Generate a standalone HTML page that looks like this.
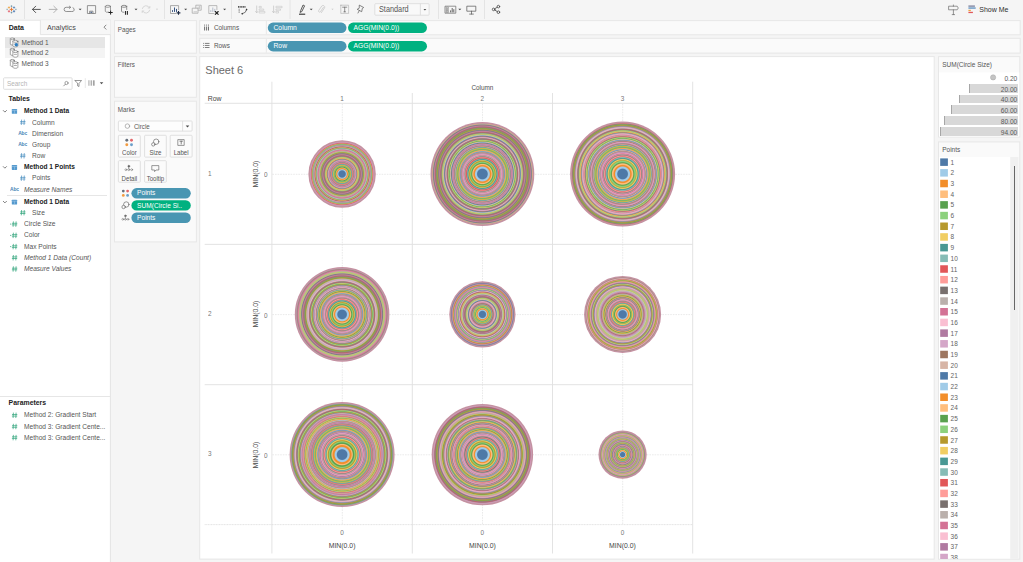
<!DOCTYPE html>
<html lang="en"><head><meta charset="utf-8"><title>Sheet 6</title>
<style>
*{box-sizing:border-box;margin:0;padding:0}
html,body{width:1023px;height:562px;overflow:hidden}
body{position:relative;background:#f5f5f5;font-family:"Liberation Sans",sans-serif;font-size:6.5px;color:#333;line-height:1}
.abs,.t,.li,.hl,svg{position:absolute}
.t{white-space:nowrap;line-height:8px;height:8px;color:#555}
.t{transform:scaleY(1.12)}
.b{font-weight:bold;color:#222;transform:none}
.it{font-style:italic}
.pt{position:absolute;color:#fff;white-space:nowrap;line-height:8px;height:8px}
.hl{height:1px;background:#e3e3e3}
svg{left:0;top:0;overflow:visible}
svg.ic{overflow:visible}
.btn{position:absolute}
.btn .t{left:0;right:0;text-align:center;font-size:6.100px}
.li{left:940px;height:9px;width:60px}
.li span{position:absolute;left:10.600px;top:0.300px;line-height:8px;font-size:6.500px;color:#636363;transform:scaleY(1.12)}
.leglist{position:absolute;left:0;top:0;width:1023px;height:558.800px;overflow:hidden}
.sz{position:absolute;right:0;height:8.600px;background:#d8d8d8;border-left:1px solid #a6a6a6}
.szt{position:absolute;right:0.900px;font-size:6.600px;line-height:9px;color:#5a5a5a;margin-top:0.600px;transform:scaleY(1.08)}
.ax{font-size:6.400px;color:#777;transform:scaleY(1.15)}
.axl{font-size:6.900px;color:#454545;transform:none}

</style></head>
<body>
<svg class="ic" width="1023" height="562" viewBox="0 0 1023 562"><rect x="0" y="20.200" width="110.400" height="543" fill="#fff"/><path d="M110.4 19.8V562" stroke="#e4e4e4" stroke-width="1" fill="none"/><path d="M0 20.200H110.400" stroke="#e2e2e2" stroke-width="0.900" fill="none"/><path d="M40.400 20.200H110.400V34.600H40.400Z" fill="#f7f7f7"/><path d="M40.400 20.200V34.600H110.400" stroke="#e2e2e2" stroke-width="0.900" fill="none"/><rect x="114.5" y="20.6" width="81.90" height="32.60" fill="#fafafa" stroke="#e7e7e7" stroke-width="1"/><rect x="114.5" y="56.6" width="81.90" height="40.70" fill="#fafafa" stroke="#e7e7e7" stroke-width="1"/><rect x="114.5" y="101.2" width="81.90" height="140.70" fill="#fafafa" stroke="#e7e7e7" stroke-width="1"/><rect x="199.7" y="20.6" width="820.50" height="14.20" fill="#fafafa" stroke="#e7e7e7" stroke-width="1"/><rect x="199.7" y="38.3" width="820.50" height="14.80" fill="#fafafa" stroke="#e7e7e7" stroke-width="1"/><rect x="199.7" y="56.6" width="734.50" height="502.50" fill="#fff" stroke="#e7e7e7" stroke-width="1"/><rect x="938.5" y="56.6" width="81.30" height="80.40" fill="#fafafa" stroke="#e7e7e7" stroke-width="1"/><rect x="938.5" y="141.9" width="81.30" height="417.20" fill="#fafafa" stroke="#e7e7e7" stroke-width="1"/><rect x="939" y="72.400" width="80.300" height="64.100" fill="#fff"/><rect x="939" y="157" width="71.300" height="401.600" fill="#fff"/><rect x="1010.300" y="157" width="8.100" height="401.600" fill="#f0f0f0"/><path d="M266.400 21.100V34.100M266.400 39V52.600" stroke="#e6e6e6" stroke-width="0.900" fill="none"/><rect x="118.4" y="121.0" width="73.70" height="10.10" fill="#fdfdfd" stroke="#d9d9d9" stroke-width="0.8" rx="0.8"/><path d="M182.600 121V131.100" stroke="#d9d9d9" stroke-width="0.800" fill="none"/><rect x="118.4" y="135.3" width="21.90" height="21.80" fill="#fbfbfb" stroke="#d9d9d9" stroke-width="0.8" rx="0.8"/><rect x="144.6" y="135.3" width="21.70" height="21.80" fill="#fbfbfb" stroke="#d9d9d9" stroke-width="0.8" rx="0.8"/><rect x="170.2" y="135.3" width="21.90" height="21.80" fill="#fbfbfb" stroke="#d9d9d9" stroke-width="0.8" rx="0.8"/><rect x="118.4" y="160.7" width="21.90" height="21.50" fill="#fbfbfb" stroke="#d9d9d9" stroke-width="0.8" rx="0.8"/><rect x="144.6" y="160.7" width="21.70" height="21.50" fill="#fbfbfb" stroke="#d9d9d9" stroke-width="0.8" rx="0.8"/><rect x="3.6" y="77.8" width="68.50" height="11.50" fill="#fff" stroke="#d6d6d6" stroke-width="0.8" rx="0.8"/><rect x="374.8" y="3.7" width="54.30" height="11.50" fill="#f9f9f9" stroke="#d9d9d9" stroke-width="0.8" rx="0.8"/><path d="M420.400 3.700V15.200" stroke="#d9d9d9" stroke-width="0.800" fill="none"/></svg>
<!-- toolbar -->
<svg class="ic" width="1023" height="20" viewBox="0 0 1023 20" fill="none" stroke-linecap="round" stroke-linejoin="round">
  <!-- tableau logo -->
  <g stroke-linecap="butt" transform="translate(11.500 9.400) scale(0.760) translate(-11.300 -9.400)">
    <path d="M11.300 7v4.800M8.900 9.400h4.800" stroke="#e8762d" stroke-width="1.200"/>
    <path d="M11.300 4v2.400M10.100 5.200h2.400M11.300 12.400v2.400M10.100 13.600h2.400" stroke="#5b879b" stroke-width="0.800"/>
    <path d="M8 5.400v3M6.500 6.900h3" stroke="#f0a340" stroke-width="1"/>
    <path d="M14.600 5.400v3M13.100 6.900h3" stroke="#5080b8" stroke-width="1"/>
    <path d="M8 10.400v3M6.500 11.900h3" stroke="#e0505c" stroke-width="1"/>
    <path d="M14.600 10.400v3M13.100 11.900h3" stroke="#3a6cab" stroke-width="1"/>
    <path d="M5.600 8.400v2M4.600 9.400h2M17 8.400v2M16 9.400h2" stroke="#7199a6" stroke-width="0.700"/>
  </g>
  <!-- separators -->
  <g stroke="#e4e4e4" stroke-width="1" stroke-linecap="butt">
    <path d="M24.5 0v19M164.5 0v19M231.5 0v19M290 0v19M438.5 0v19M484.5 0v19"/>
  </g>
  <!-- back / forward -->
  <path d="M40.300 9.400H32.500M35.700 6.200L32.500 9.400l3.200 3.200" stroke="#444" stroke-width="0.900"/>
  <path d="M49.2 9.4H57M53.8 6.2L57 9.4l-3.2 3.2" stroke="#aaa" stroke-width="0.9"/>
  <!-- replay -->
  <path d="M70.5 7.3H66.2a2 2 0 0 0 0 4.2h5.6a2 2 0 0 0 1.2-3.8M69.4 6.2l1.3 1.1-1.3 1.1" stroke="#777" stroke-width="0.8"/>
  <!-- save -->
  <path d="M87.800 5.600h7.800v7.900h-7.800zM89.600 13.500v-2.300h3.400v2.300" stroke="#7c7c7c" stroke-width="0.800"/><path d="M90.800 12.300h1" stroke="#33507f" stroke-width="1"/>
  <!-- add datasource -->
  <g stroke="#777" stroke-width="0.700">
    <path d="M105.300 6.300v5a2.600 1 0 0 0 3.400 .900M110.500 6.300v3.600"/>
    <ellipse cx="107.9" cy="6.3" rx="2.6" ry="1"/>
    <path d="M110.6 10.8v3.4M108.9 12.5h3.4" stroke="#222" stroke-width="1"/>
  </g>
  <!-- pause datasource -->
  <g stroke="#777" stroke-width="0.8">
    <path d="M121.5 6.3v5a2.6 1 0 0 0 2.4 1M126.7 6.3v3.2"/>
    <ellipse cx="124.1" cy="6.3" rx="2.6" ry="1"/>
    <path d="M125.500 10.900v3.800M127.400 10.900v3.800" stroke="#2b2b2b" stroke-width="1.100" stroke-linecap="butt"/>
  </g>
  <!-- refresh -->
  <path d="M142.3 8.6a3.9 3.9 0 0 1 7.2-0.8M149.7 10.2a3.9 3.9 0 0 1-7.2 0.8M149.8 6.4v1.6h-1.6M142.2 12.6V11h1.6" stroke="#cfcfcf" stroke-width="0.8"/>
  <!-- new worksheet -->
  <g stroke="#8a8a8a" stroke-width="0.700">
    <path d="M178.600 9.800V5.600H170.500V13.500H175.800"/>
    <path d="M172.500 11.900V10.200M174.500 11.900V7.500M176.500 11.900V8.900" stroke="#33507f" stroke-linecap="butt" stroke-width="1"/>
    <path d="M178.500 11v3.800M176.600 12.900h3.800" stroke="#1d2a44" stroke-width="1.100" stroke-linecap="butt"/>
  </g>
  <!-- duplicate -->
  <g stroke="#a9a9a9" stroke-width="0.8">
    <path d="M196.2 5.2h5v5h-5z"/>
    <path d="M192.6 8.2h5.4v5h-5.4z" fill="#f5f5f5"/>
    <path d="M198.2 8.6V7M199.6 8.6V6.4M194 11.8h2.6" stroke-width="0.6"/>
  </g>
  <!-- clear -->
  <g stroke="#a2a2a2" stroke-width="0.700">
    <path d="M216.900 9.600V5.600H208.800V13.500H214"/>
    <path d="M210.800 11.900V10.200M212.800 11.900V7.500M214.800 11.900V8.900" stroke="#b4bccb" stroke-linecap="butt" stroke-width="1"/>
    <path d="M215.300 11.500l2.900 2.900M218.200 11.500l-2.900 2.900" stroke="#222" stroke-width="1.100"/>
  </g>
  <!-- swap -->
  <g stroke="#444" stroke-width="0.800">
    <path d="M238 6.900h7.800" stroke="#555" stroke-dasharray="1.100 0.500" stroke-linecap="butt" stroke-width="1.600"/>
    <path d="M239.200 8.800v4.400" stroke="#999" stroke-dasharray="1 0.500" stroke-linecap="butt" stroke-width="1.400"/>
    <path d="M246.500 9.700Q246.200 13 242.700 13.600" stroke-width="0.700"/>
    <path d="M246.600 8.500l0.900 1.100-0.900 1.100-0.900-1.100zM242.200 12.700l1 1-1 1-1-1z" fill="#333" stroke="none"/>
  </g>
  <!-- sort asc / desc -->
  <g stroke="#c6c6c6" stroke-width="0.800">
    <path d="M256.700 6v6.600M255.600 11.500l1.100 1.300 1.100-1.300"/>
    <path d="M259.500 6.400h1.800v1.400h-1.800zM259.500 9h4.200v1.300h-4.200zM259.500 11.400h5.400v1.600h-5.400z" stroke-width="0.600"/>
    <path d="M273.600 6v6.600M272.500 11.500l1.100 1.300 1.100-1.300"/>
    <path d="M276.300 6.300h5.800v1.400h-5.800zM276.300 9h4.200v1.300h-4.200zM276.300 11.400h2.200v1.600h-2.200z" stroke-width="0.600"/>
  </g>
  <!-- highlighter -->
  <path d="M303.400 5.200l1.200.6-2.800 5.800-1.800.8.600-1.600z" stroke="#333" stroke-width="0.8"/>
  <path d="M299 14.200h6.200" stroke="#333" stroke-width="1.100" stroke-linecap="butt"/>
  <!-- paperclip -->
  <path d="M323.400 7.400l-3 4.400a1.100 1.100 0 0 1-1.800-1.200l3.200-4.600a1.700 1.700 0 0 1 2.800 1.800l-3.200 4.800" stroke="#c9c9c9" stroke-width="0.800"/>
  <!-- T box -->
  <path d="M340.800 5.200h7.800v8.200h-7.800z" stroke="#b0b0b0" stroke-width="0.600" stroke-dasharray="0.900 0.600"/>
  <path d="M342.600 7.200h4.200M344.700 7.200v4.600M343.900 11.800h1.600" stroke="#666" stroke-width="0.700"/>
  <!-- pin -->
  <path d="M359.600 5.300L363.700 7.500L362.300 8.400L361.700 11.700L357.200 9.300L358.900 8.400ZM359.200 10.800L358 13" stroke="#555" stroke-width="0.700"/>
  <!-- show cards -->
  <g stroke="#666" stroke-width="0.700">
    <path d="M445.400 6.200h10.400v7h-10.400z"/>
    <path d="M446.600 7.200h1.800v1.400h-1.800zM446.600 9.400h1.800v1.200h-1.800zM446.600 11.200h1.800v1.200h-1.800z" stroke-width="0.500"/>
    <path d="M450.600 12.400v-2M452.200 12.400V8M453.800 12.400v-3.200" stroke-linecap="butt" stroke-width="1"/>
  </g>
  <!-- presentation -->
  <path d="M467.200 6.200h8.600v5h-8.600zM471.500 11.200v2.800M469.600 14.100h3.800" stroke="#555" stroke-width="0.700"/>
  <!-- share -->
  <g stroke="#444" stroke-width="0.800">
    <circle cx="493.600" cy="9.400" r="1.300"/><circle cx="498.400" cy="6.600" r="1.300"/><circle cx="498.400" cy="12.200" r="1.300"/>
    <path d="M494.800 8.700l2.400-1.400M494.800 10.100l2.400 1.400"/>
  </g>
  <!-- carets -->
  <g fill="#444" stroke="none">
    <path d="M78.600 8.700h3l-1.500 1.600z"/>
    <path d="M134.500 8.700h3l-1.500 1.600z"/>
    <path d="M184.200 8.700h3l-1.500 1.600z"/>
    <path d="M223.100 8.700h3l-1.500 1.600z"/>
    <path d="M309.700 8.700h3l-1.500 1.600z"/>
    <path d="M458.300 8.700h3l-1.500 1.600z"/>
    <path d="M423.500 8.900h2.800l-1.400 1.600z" fill="#444"/>
  </g>
  <g fill="#c8c8c8" stroke="none">
    <path d="M155.900 8.800h2.200l-1.100 1.300z"/>
    <path d="M331.400 8.800h2.200l-1.100 1.300z"/>
  </g>
  <!-- guide icon (right) -->
  <path d="M949 6.200h8.200l1.100 1.800-1.100 1.800H949zM953.400 9.800v4.700M953.400 5v1.200M952.200 14.600h2.400" stroke="#6a6a6a" stroke-width="0.700"/>
  <!-- show me icon -->
  <g stroke-linecap="butt" stroke-width="1.300">
    <path d="M968.400 6.100h6.500" stroke="#7a7f9c"/>
    <path d="M968.400 8.050h7.300" stroke="#5b8fc0"/>
    <path d="M968.400 10.450h2.400" stroke="#f0a03c"/>
    <path d="M968.400 12.450h4.500" stroke="#e15759"/>
  </g>
</svg>
<div class="t" style="left:379px;top:5.500px;font-size:7.300px;color:#555">Standard</div>
<div class="t" style="left:979.300px;top:5.600px;font-size:7px;color:#2e2e2e">Show Me</div>
<!-- data pane -->
<div class="t b" style="left:8.800px;top:24.100px;font-size:7px">Data</div>
<div class="t" style="left:47px;top:24px;font-size:7.200px;color:#4a4a4a;transform:scaleY(1.05)">Analytics</div>
<div class="abs" style="left:5px;top:37px;width:99.500px;height:10.500px;background:#e6e6e6"></div>
<div class="abs" style="left:5px;top:47.500px;width:99.500px;height:10.300px;background:#f4f4f4"></div>
<svg class="ic" width="111" height="562" viewBox="0 0 111 562" fill="none" stroke-linecap="round" stroke-linejoin="round">
  <path d="M106 25.100l-2 2.050 2 2.050" stroke="#555" stroke-width="0.700"/>
  <!-- datasource icons -->
  <g stroke="#5e5e5e" stroke-width="0.550">
    <g><path d="M10.300 38.90v5.200a2 .900 0 0 0 4 0v-5.200" fill="#fff"/><ellipse cx="12.300" cy="38.90" rx="2" ry="0.900" fill="#fff"/><path d="M12.900 41.30v4.600a2.500 1 0 0 0 5 0v-4.600" fill="#fff"/><ellipse cx="15.400" cy="41.30" rx="2.500" ry="1" fill="#fff"/><path d="M14.300 44.10h2.200" stroke-width="0.500"/><circle cx="16.300" cy="44.70" r="1.700" fill="#2f7fc1" stroke="none"/></g>
    <g><path d="M10.300 49.20v5.200a2 .900 0 0 0 4 0v-5.200" fill="#fff"/><ellipse cx="12.300" cy="49.20" rx="2" ry="0.900" fill="#fff"/><path d="M12.900 51.60v4.600a2.500 1 0 0 0 5 0v-4.600" fill="#fff"/><ellipse cx="15.400" cy="51.60" rx="2.500" ry="1" fill="#fff"/><path d="M14.300 54.40h2.200" stroke-width="0.500"/></g>
    <g><path d="M10.300 60.30v5.200a2 .900 0 0 0 4 0v-5.200" fill="#fff"/><ellipse cx="12.300" cy="60.30" rx="2" ry="0.900" fill="#fff"/><path d="M12.900 62.70v4.600a2.500 1 0 0 0 5 0v-4.600" fill="#fff"/><ellipse cx="15.400" cy="62.70" rx="2.500" ry="1" fill="#fff"/><path d="M14.300 65.50h2.200" stroke-width="0.500"/></g>
  </g>
  <!-- search magnifier / filter / view -->
  <circle cx="66.500" cy="83" r="1.600" stroke="#6a6a6a" stroke-width="0.600"/>
  <path d="M65.300 84.300l-1.600 1.600" stroke="#6a6a6a" stroke-width="0.700"/>
  <path d="M75.100 80.500h6.400l-2.500 3v3l-1.400-.7v-2.300z" stroke="#555" stroke-width="0.600"/>
  <path d="M85.300 78.600v9" stroke="#e2e2e2" stroke-width="0.800"/>
  <path d="M88.900 80.300v5.400" stroke="#c4c4c4" stroke-width="1.500" stroke-linecap="butt"/>
  <path d="M91.300 80.300v5.400" stroke="#b0b0b0" stroke-width="1.500" stroke-linecap="butt"/>
  <path d="M93.800 80.300v5.400" stroke="#a2a2a2" stroke-width="1.700" stroke-linecap="butt"/>
  <path d="M99.800 82.200h3.500l-1.750 2.100z" fill="#4d4d4d" stroke="none"/>
  <!-- expand chevrons -->
  <g stroke="#6a6a6a" stroke-width="0.850">
    <path d="M3.300 110.500l1.600 1.600 1.600-1.600"/>
    <path d="M3.300 166.600l1.600 1.600 1.600-1.600"/>
    <path d="M3.300 201.300l1.600 1.600 1.600-1.600"/>
  </g>
  <!-- table icons -->
  <g fill="#559ace" stroke="none">
    <rect x="11.800" y="108.900" width="5.300" height="4.900" rx="0.600"/>
    <rect x="11.800" y="165" width="5.300" height="4.900" rx="0.600"/>
    <rect x="11.800" y="199.700" width="5.300" height="4.900" rx="0.600"/>
  </g>
  <g stroke="#a9cdea" stroke-width="0.500" stroke-linecap="butt">
    <path d="M12 110.400h5M14.500 110.400v3.200M12 166.500h5M14.500 166.500v3.200M12 201.200h5M14.500 201.200v3.200"/>
  </g>
  <!-- blue # icons -->
  <g stroke="#4a8fc0" stroke-width="0.700" stroke-linecap="butt">
    <path d="M21.600 119.600l-0.300 5.400M24.300 119.600l-0.300 5.400M20.200 121.500h5.300M20.100 123.100h5.300"/>
    <path d="M21.600 153.100l-0.300 5.400M24.300 153.100l-0.300 5.400M20.200 155.000h5.300M20.100 156.600h5.300"/>
    <path d="M21.600 175.500l-0.300 5.400M24.300 175.500l-0.300 5.400M20.200 177.400h5.300M20.100 179.000h5.300"/>
  </g>
  <!-- green # icons -->
  <g stroke="#2ea37a" stroke-width="0.700" stroke-linecap="butt">
    <path d="M21.600 210.000l-0.300 5.400M24.300 210.000l-0.300 5.400M20.200 211.900h5.300M20.100 213.500h5.300"/>
    <path d="M13.400 221.400l-0.300 5.400M16.100 221.400l-0.300 5.400M12.000 223.300h5.300M11.900 224.900h5.300M10.000 224.100h1.300"/>
    <path d="M13.400 232.700l-0.300 5.400M16.100 232.700l-0.300 5.400M12.000 234.600h5.300M11.900 236.200h5.300M10.000 235.400h1.300"/>
    <path d="M13.400 243.900l-0.300 5.400M16.100 243.900l-0.300 5.400M12.000 245.800h5.300M11.900 247.400h5.300M10.000 246.600h1.300"/>
    <path d="M13.400 255.000l-0.300 5.400M16.100 255.000l-0.300 5.400M12.000 256.900h5.300M11.900 258.500h5.300"/>
    <path d="M13.400 266.300l-0.300 5.400M16.100 266.300l-0.300 5.400M12.000 268.200h5.300M11.900 269.800h5.300"/>
    <path d="M13.400 412.600l-0.300 5.400M16.100 412.600l-0.300 5.400M12.000 414.500h5.300M11.900 416.100h5.300"/>
    <path d="M13.400 423.800l-0.300 5.400M16.100 423.800l-0.300 5.400M12.000 425.700h5.300M11.900 427.300h5.300"/>
    <path d="M13.400 434.900l-0.300 5.400M16.100 434.900l-0.300 5.400M12.000 436.800h5.300M11.900 438.400h5.300"/>
  </g>
</svg>
<div class="t" style="left:21.500px;top:38.700px;font-size:6.500px">Method 1</div>
<div class="t" style="left:21.500px;top:48.800px;font-size:6.500px">Method 2</div>
<div class="t" style="left:21.500px;top:59.900px;font-size:6.500px">Method 3</div>
<div class="t" style="left:7px;top:80.200px;font-size:6.400px;color:#b5b5b5">Search</div>
<div class="t b" style="left:8.600px;top:94.600px;font-size:6.900px">Tables</div>
<div class="t b" style="left:24px;top:106.900px;font-size:6.600px">Method 1 Data</div>
<div class="t" style="left:32px;top:118.500px;font-size:6.600px">Column</div>
<div class="t" style="left:32px;top:129.700px;font-size:6.600px">Dimension</div>
<div class="t" style="left:32px;top:140.900px;font-size:6.600px">Group</div>
<div class="t" style="left:32px;top:152px;font-size:6.600px">Row</div>
<div class="t b" style="left:24px;top:163.200px;font-size:6.600px">Method 1 Points</div>
<div class="t" style="left:32px;top:174.400px;font-size:6.600px">Points</div>
<div class="t it" style="left:24px;top:185.600px;font-size:6.600px">Measure Names</div>
<div class="hl" style="left:7px;top:195.200px;width:100px;background:#e6e6e6"></div>
<div class="t b" style="left:24px;top:197.700px;font-size:6.600px">Method 1 Data</div>
<div class="t" style="left:32px;top:208.900px;font-size:6.600px">Size</div>
<div class="t" style="left:24px;top:220.100px;font-size:6.600px">Circle Size</div>
<div class="t" style="left:24px;top:231.400px;font-size:6.600px">Color</div>
<div class="t" style="left:24px;top:242.600px;font-size:6.600px">Max Points</div>
<div class="t it" style="left:24px;top:253.700px;font-size:6.600px">Method 1 Data (Count)</div>
<div class="t it" style="left:24px;top:265px;font-size:6.600px">Measure Values</div>
<div class="hl" style="left:0;top:395.800px;width:110px;background:#e6e6e6"></div>
<div class="t b" style="left:8.600px;top:398.800px;font-size:6.900px">Parameters</div>
<div class="t" style="left:24px;top:411.300px;font-size:6.600px">Method 2: Gradient Start</div>
<div class="t" style="left:24px;top:422.500px;font-size:6.600px">Method 3: Gradient Cente...</div>
<div class="t" style="left:24px;top:433.600px;font-size:6.600px">Method 3: Gradient Cente...</div>
<!-- Abc icons -->
<div class="t" style="left:18.200px;top:130.200px;font-size:4.900px;font-weight:bold;color:#4a84b6;letter-spacing:-0.100px">Abc</div>
<div class="t" style="left:18.200px;top:141.400px;font-size:4.900px;font-weight:bold;color:#4a84b6;letter-spacing:-0.100px">Abc</div>
<div class="t" style="left:10px;top:186.100px;font-size:4.900px;font-weight:bold;color:#4a84b6;letter-spacing:-0.100px">Abc</div>
<!-- pages / filters / marks cards -->
<div class="t" style="left:117.800px;top:25.500px;font-size:6.300px">Pages</div>
<div class="t" style="left:117.800px;top:61.100px;font-size:6.300px">Filters</div>
<div class="t" style="left:117.800px;top:105.800px;font-size:6.300px">Marks</div>
<div class="t" style="left:133.900px;top:122.800px;font-size:6.200px">Circle</div>
<div class="btn" style="left:118.100px;top:135px;width:22.600px;height:22.400px"><div class="t" style="top:13.900px">Color</div></div>
<div class="btn" style="left:144.200px;top:135px;width:22.500px;height:22.400px"><div class="t" style="top:13.900px">Size</div></div>
<div class="btn" style="left:169.900px;top:135px;width:22.500px;height:22.400px"><div class="t" style="top:13.900px">Label</div></div>
<div class="btn" style="left:118.100px;top:160.400px;width:22.600px;height:22.200px"><div class="t" style="top:14.400px">Detail</div></div>
<div class="btn" style="left:144.200px;top:160.400px;width:22.500px;height:22.200px"><div class="t" style="top:14.400px">Tooltip</div></div>
<svg class="ic" width="200" height="250" viewBox="0 0 200 250" fill="none" stroke-linecap="round" stroke-linejoin="round">
  <circle cx="127.400" cy="126.100" r="2.250" stroke="#8a8a8a" stroke-width="0.600"/>
  <path d="M185.700 125.500h3.600l-1.800 2z" fill="#4a4a4a"/>
  <!-- color icon -->
  <circle cx="126.800" cy="140.200" r="1.450" fill="#66707c"/><circle cx="131.500" cy="140.200" r="1.450" fill="#e3666a"/>
  <circle cx="126.800" cy="144.800" r="1.450" fill="#f29a3f"/><circle cx="131.500" cy="144.800" r="1.450" fill="#6b9fc9"/>
  <!-- size icon -->
  <g stroke="#555" stroke-width="0.600">
    <circle cx="156.200" cy="141.700" r="2.700"/><circle cx="153.300" cy="144.400" r="1.700" fill="#fafafa"/>
  </g>
  <!-- label icon -->
  <g stroke="#555" stroke-width="0.600">
    <path d="M178.200 139.600h6v5.800h-6z"/><path d="M179.900 141.200h2.600M181.200 141.200v2.800" stroke-width="0.700"/>
  </g>
  <!-- detail icon -->
  <g stroke="#666" stroke-width="0.500">
    <circle cx="128.800" cy="166.200" r="0.950" fill="#666"/>
    <circle cx="125.900" cy="169.700" r="0.950"/><circle cx="128.800" cy="169.700" r="0.950"/><circle cx="131.700" cy="169.700" r="0.950"/>
    <path d="M128.800 167.200v1.500"/>
  </g>
  <!-- tooltip icon -->
  <path d="M152.200 165.600h6.600v4.400h-2.800l-1.400 1.600v-1.600h-2.400z" stroke="#555" stroke-width="0.600"/>
  <!-- pill-side icons -->
  <circle cx="123.300" cy="191.100" r="1.400" fill="#66707c"/><circle cx="127.600" cy="191.100" r="1.400" fill="#e3666a"/>
  <circle cx="123.300" cy="195.400" r="1.400" fill="#f29a3f"/><circle cx="127.600" cy="195.400" r="1.400" fill="#6b9fc9"/>
  <g stroke="#555" stroke-width="0.600">
    <circle cx="126.300" cy="204.500" r="2.700"/><circle cx="123.600" cy="207" r="1.700" fill="#fafafa"/>
  </g>
  <g stroke="#666" stroke-width="0.500">
    <circle cx="125.400" cy="215.800" r="0.900" fill="#666"/>
    <circle cx="122.800" cy="219.300" r="0.900"/><circle cx="125.400" cy="219.300" r="0.900"/><circle cx="128" cy="219.300" r="0.900"/>
    <path d="M125.400 216.800v1.500"/>
  </g>
</svg>
<!-- shelves -->
<svg class="ic" width="270" height="60" viewBox="0 0 270 60" fill="none" stroke="#555" stroke-linecap="butt">
  <path d="M204.600 26.500v4M206.600 26.500v4M208.500 26.500v4" stroke-width="0.850"/>
  <path d="M204.600 24.600v1M206.600 24.600v1M208.500 24.600v1" stroke-width="0.850"/>
  <path d="M203.200 43.400h0.900M204.900 43.400h4.600M203.200 45.450h0.900M204.900 45.450h4.600M203.200 47.500h0.900M204.900 47.500h4.600" stroke-width="0.750"/>
</svg>
<div class="t" style="left:213.900px;top:23.800px;font-size:6.400px">Columns</div>
<div class="t" style="left:213.900px;top:41.700px;font-size:6.400px">Rows</div>
<!-- view -->
<div class="t" style="left:205.300px;top:64.300px;font-size:11px;line-height:12px;height:12px;color:#6a6a6a;transform:none">Sheet 6</div>
<svg class="ic" width="1023" height="562" viewBox="0 0 1023 562" fill="none" stroke-linecap="butt">
  <g stroke="#e0e0e0" stroke-width="0.900">
    <path d="M271.900 81.700V553.500M692.700 81.700V553.500M412.300 93V553.500M552.500 93V553.500"/>
    <path d="M204.700 103.300H692.700M204.700 244.400H692.700M204.700 384.700H692.700"/>
    <path d="M204.700 524.600H692.700" stroke="#dadada" stroke-width="0.800" stroke-dasharray="1 0.600"/>
  </g>
  <g stroke="#dcdcdc" stroke-width="0.600" stroke-dasharray="1.600 1">
    <path d="M272.400 174.300H692M272.400 314.600H692M272.400 454.800H692"/>
    <path d="M342.300 103.800V524.200M482.500 103.800V524.200M622.700 103.800V524.200"/>
  </g>
</svg>
<div class="t axl" style="left:452.400px;top:84px;width:60px;text-align:center;font-size:6.400px;color:#505050;transform:scaleY(1.1)">Column</div>
<div class="t axl" style="left:207.800px;top:94.800px">Row</div>
<div class="t ax" style="left:332.100px;top:94.600px;width:20px;text-align:center">1</div>
<div class="t ax" style="left:472.400px;top:94.600px;width:20px;text-align:center">2</div>
<div class="t ax" style="left:612.500px;top:94.600px;width:20px;text-align:center">3</div>
<div class="t ax" style="left:208px;top:169.700px">1</div>
<div class="t ax" style="left:208px;top:310.200px">2</div>
<div class="t ax" style="left:208px;top:450.400px">3</div>
<div class="t ax" style="left:264px;top:171.100px">0</div>
<div class="t ax" style="left:264px;top:311.500px">0</div>
<div class="t ax" style="left:264px;top:451.700px">0</div>
<div class="t axl" style="left:235.900px;top:169.800px;width:40px;text-align:center;transform:rotate(-90deg)">MIN(0.0)</div>
<div class="t axl" style="left:235.900px;top:310.300px;width:40px;text-align:center;transform:rotate(-90deg)">MIN(0.0)</div>
<div class="t axl" style="left:235.900px;top:450.500px;width:40px;text-align:center;transform:rotate(-90deg)">MIN(0.0)</div>
<div class="t ax" style="left:332.100px;top:529.200px;width:20px;text-align:center">0</div>
<div class="t ax" style="left:472.400px;top:529.200px;width:20px;text-align:center">0</div>
<div class="t ax" style="left:612.500px;top:529.200px;width:20px;text-align:center">0</div>
<div class="t axl" style="left:312.100px;top:541.800px;width:60px;text-align:center">MIN(0.0)</div>
<div class="t axl" style="left:452.400px;top:541.800px;width:60px;text-align:center">MIN(0.0)</div>
<div class="t axl" style="left:592.500px;top:541.800px;width:60px;text-align:center">MIN(0.0)</div>
<svg class="ic" width="430" height="230" viewBox="0 0 430 230"><rect x="131.4" y="188.1" width="59.4" height="10.5" rx="5.25" fill="#4996b2"/><rect x="131.4" y="200.3" width="59.4" height="10.3" rx="5.15" fill="#00b180"/><rect x="131.4" y="212.6" width="59.4" height="10.3" rx="5.15" fill="#4996b2"/><rect x="267.8" y="22.6" width="78.7" height="10.5" rx="5.25" fill="#4996b2"/><rect x="348.0" y="22.6" width="79.0" height="10.5" rx="5.25" fill="#00b180"/><rect x="267.8" y="40.9" width="78.7" height="10.5" rx="5.25" fill="#4996b2"/><rect x="348.0" y="40.9" width="79.0" height="10.5" rx="5.25" fill="#00b180"/></svg>
<div class="pt" style="left:137.1px;top:189.45px;font-size:6.6px">Points</div>
<div class="pt" style="left:137.1px;top:201.55px;font-size:6.6px">SUM(Circle Si..</div>
<div class="pt" style="left:137.1px;top:213.85px;font-size:6.6px">Points</div>
<div class="pt" style="left:273.5px;top:23.95px;font-size:6.75px">Column</div>
<div class="pt" style="left:353.5px;top:23.95px;font-size:6.75px">AGG(MIN(0.0))</div>
<div class="pt" style="left:273.5px;top:42.25px;font-size:6.75px">Row</div>
<div class="pt" style="left:353.5px;top:42.25px;font-size:6.75px">AGG(MIN(0.0))</div>
<svg class="marks" width="1023" height="562" viewBox="0 0 1023 562"><defs><radialGradient id="g0" cx="0" cy="0" r="33.7" gradientUnits="userSpaceOnUse"><stop offset="0.0000" stop-color="#4e79a7"/><stop offset="0.0089" stop-color="#4e79a7"/><stop offset="0.0178" stop-color="#4e79a7"/><stop offset="0.0267" stop-color="#4e79a7"/><stop offset="0.0356" stop-color="#4e79a7"/><stop offset="0.0445" stop-color="#4e79a7"/><stop offset="0.0534" stop-color="#4e79a7"/><stop offset="0.0623" stop-color="#4e79a7"/><stop offset="0.0712" stop-color="#4e79a7"/><stop offset="0.0801" stop-color="#4e79a7"/><stop offset="0.0890" stop-color="#4e79a7"/><stop offset="0.0979" stop-color="#5782ae"/><stop offset="0.1068" stop-color="#709bc2"/><stop offset="0.1157" stop-color="#88b3d5"/><stop offset="0.1246" stop-color="#9ec9e6"/><stop offset="0.1335" stop-color="#b1bec0"/><stop offset="0.1424" stop-color="#caac87"/><stop offset="0.1513" stop-color="#e3994f"/><stop offset="0.1602" stop-color="#f39130"/><stop offset="0.1691" stop-color="#f79f48"/><stop offset="0.1780" stop-color="#ecab5d"/><stop offset="0.1869" stop-color="#c1b168"/><stop offset="0.1958" stop-color="#90ab5e"/><stop offset="0.2047" stop-color="#60a351"/><stop offset="0.2136" stop-color="#67ae5b"/><stop offset="0.2226" stop-color="#76bc68"/><stop offset="0.2315" stop-color="#92b95e"/><stop offset="0.2404" stop-color="#a9b250"/><stop offset="0.2493" stop-color="#c7b148"/><stop offset="0.2582" stop-color="#c9b556"/><stop offset="0.2671" stop-color="#a8b575"/><stop offset="0.2760" stop-color="#83ae8c"/><stop offset="0.2849" stop-color="#69aaa3"/><stop offset="0.2938" stop-color="#8f9b97"/><stop offset="0.3027" stop-color="#b98685"/><stop offset="0.3116" stop-color="#dd7d7c"/><stop offset="0.3205" stop-color="#e67e7d"/><stop offset="0.3294" stop-color="#c68583"/><stop offset="0.3383" stop-color="#ad8a87"/><stop offset="0.3472" stop-color="#9a8e8c"/><stop offset="0.3561" stop-color="#b49199"/><stop offset="0.3650" stop-color="#ca90a2"/><stop offset="0.3739" stop-color="#c982a0"/><stop offset="0.3828" stop-color="#c480a4"/><stop offset="0.3917" stop-color="#c38db1"/><stop offset="0.4006" stop-color="#c597b1"/><stop offset="0.4095" stop-color="#d0a7b1"/><stop offset="0.4184" stop-color="#b5a0a8"/><stop offset="0.4273" stop-color="#9196a5"/><stop offset="0.4362" stop-color="#958f8d"/><stop offset="0.4451" stop-color="#ad8c6c"/><stop offset="0.4540" stop-color="#e1a15f"/><stop offset="0.4629" stop-color="#e5ad5e"/><stop offset="0.4718" stop-color="#c6c176"/><stop offset="0.4807" stop-color="#b6c672"/><stop offset="0.4896" stop-color="#bacb6c"/><stop offset="0.4985" stop-color="#afbe71"/><stop offset="0.5074" stop-color="#98af7d"/><stop offset="0.5163" stop-color="#948e7d"/><stop offset="0.5252" stop-color="#a37877"/><stop offset="0.5341" stop-color="#b06b6b"/><stop offset="0.5430" stop-color="#ac6f73"/><stop offset="0.5519" stop-color="#a77683"/><stop offset="0.5608" stop-color="#b97b93"/><stop offset="0.5697" stop-color="#c47c9f"/><stop offset="0.5786" stop-color="#b67e93"/><stop offset="0.5875" stop-color="#a67d84"/><stop offset="0.5964" stop-color="#8a7d86"/><stop offset="0.6053" stop-color="#838186"/><stop offset="0.6142" stop-color="#9c8876"/><stop offset="0.6231" stop-color="#ab915d"/><stop offset="0.6320" stop-color="#aa9c44"/><stop offset="0.6409" stop-color="#a2ab50"/><stop offset="0.6499" stop-color="#a8b85d"/><stop offset="0.6588" stop-color="#b3bf7a"/><stop offset="0.6677" stop-color="#b6b990"/><stop offset="0.6766" stop-color="#b9aaa0"/><stop offset="0.6855" stop-color="#cf9c9d"/><stop offset="0.6944" stop-color="#e38a97"/><stop offset="0.7033" stop-color="#d1829b"/><stop offset="0.7122" stop-color="#c47da0"/><stop offset="0.7211" stop-color="#c38da2"/><stop offset="0.7300" stop-color="#bf9ba6"/><stop offset="0.7389" stop-color="#bab1b7"/><stop offset="0.7478" stop-color="#aebab5"/><stop offset="0.7567" stop-color="#8cb69c"/><stop offset="0.7656" stop-color="#93b375"/><stop offset="0.7745" stop-color="#a5b75a"/><stop offset="0.7834" stop-color="#c3a861"/><stop offset="0.7923" stop-color="#db8f64"/><stop offset="0.8012" stop-color="#ba7569"/><stop offset="0.8101" stop-color="#b07375"/><stop offset="0.8190" stop-color="#b88f96"/><stop offset="0.8279" stop-color="#c59ba4"/><stop offset="0.8368" stop-color="#ce9c9f"/><stop offset="0.8457" stop-color="#b1999d"/><stop offset="0.8546" stop-color="#a2a1a4"/><stop offset="0.8635" stop-color="#92ae9e"/><stop offset="0.8724" stop-color="#89b488"/><stop offset="0.8813" stop-color="#9eb565"/><stop offset="0.8902" stop-color="#b3b060"/><stop offset="0.8991" stop-color="#db9a63"/><stop offset="0.9080" stop-color="#d6816f"/><stop offset="0.9169" stop-color="#d66c7c"/><stop offset="0.9258" stop-color="#d37f99"/><stop offset="0.9347" stop-color="#d090ae"/><stop offset="0.9436" stop-color="#cc9ab2"/><stop offset="0.9525" stop-color="#c69bad"/><stop offset="0.9614" stop-color="#c197a4"/><stop offset="0.9703" stop-color="#c194a2"/><stop offset="0.9792" stop-color="#c392a1"/><stop offset="0.9881" stop-color="#c58fa1"/><stop offset="0.9970" stop-color="#c68ea0"/><stop offset="1.0000" stop-color="#c68ea0"/></radialGradient><radialGradient id="g1" cx="0" cy="0" r="51.9" gradientUnits="userSpaceOnUse"><stop offset="0.0000" stop-color="#4e79a7"/><stop offset="0.0058" stop-color="#4e79a7"/><stop offset="0.0116" stop-color="#4e79a7"/><stop offset="0.0173" stop-color="#4e79a7"/><stop offset="0.0231" stop-color="#4e79a7"/><stop offset="0.0289" stop-color="#4e79a7"/><stop offset="0.0347" stop-color="#4e79a7"/><stop offset="0.0405" stop-color="#4e79a7"/><stop offset="0.0462" stop-color="#4e79a7"/><stop offset="0.0520" stop-color="#4e79a7"/><stop offset="0.0578" stop-color="#4e79a7"/><stop offset="0.0636" stop-color="#4e79a7"/><stop offset="0.0694" stop-color="#4e79a7"/><stop offset="0.0751" stop-color="#4e79a7"/><stop offset="0.0809" stop-color="#4e79a7"/><stop offset="0.0867" stop-color="#4e79a7"/><stop offset="0.0925" stop-color="#4e79a7"/><stop offset="0.0983" stop-color="#628db7"/><stop offset="0.1040" stop-color="#7ba6ca"/><stop offset="0.1098" stop-color="#93bede"/><stop offset="0.1156" stop-color="#a0cbe8"/><stop offset="0.1214" stop-color="#a0cbe8"/><stop offset="0.1272" stop-color="#a0cbe8"/><stop offset="0.1329" stop-color="#a1cae5"/><stop offset="0.1387" stop-color="#b6bbb5"/><stop offset="0.1445" stop-color="#cfa87d"/><stop offset="0.1503" stop-color="#e79644"/><stop offset="0.1561" stop-color="#f28e2b"/><stop offset="0.1618" stop-color="#f28f2c"/><stop offset="0.1676" stop-color="#f4973b"/><stop offset="0.1734" stop-color="#f8a653"/><stop offset="0.1792" stop-color="#fcb46c"/><stop offset="0.1850" stop-color="#ffbe7d"/><stop offset="0.1908" stop-color="#d0b670"/><stop offset="0.1965" stop-color="#9ead62"/><stop offset="0.2023" stop-color="#6ca454"/><stop offset="0.2081" stop-color="#5ea654"/><stop offset="0.2139" stop-color="#6eb462"/><stop offset="0.2197" stop-color="#7dc36f"/><stop offset="0.2254" stop-color="#8cd17d"/><stop offset="0.2312" stop-color="#97c369"/><stop offset="0.2370" stop-color="#a3b251"/><stop offset="0.2428" stop-color="#b0a139"/><stop offset="0.2486" stop-color="#bc9f33"/><stop offset="0.2543" stop-color="#ceaf43"/><stop offset="0.2601" stop-color="#ccb859"/><stop offset="0.2659" stop-color="#acb776"/><stop offset="0.2717" stop-color="#7aa886"/><stop offset="0.2775" stop-color="#4e9a93"/><stop offset="0.2832" stop-color="#5ba29e"/><stop offset="0.2890" stop-color="#71a9a4"/><stop offset="0.2948" stop-color="#9b9996"/><stop offset="0.3006" stop-color="#bd7f7e"/><stop offset="0.3064" stop-color="#d86162"/><stop offset="0.3121" stop-color="#e76566"/><stop offset="0.3179" stop-color="#f07a7a"/><stop offset="0.3237" stop-color="#da8583"/><stop offset="0.3295" stop-color="#b98684"/><stop offset="0.3353" stop-color="#a18986"/><stop offset="0.3410" stop-color="#9e9591"/><stop offset="0.3468" stop-color="#b2a8a4"/><stop offset="0.3526" stop-color="#bea4a8"/><stop offset="0.3584" stop-color="#c692a1"/><stop offset="0.3642" stop-color="#d791a8"/><stop offset="0.3699" stop-color="#e89bb6"/><stop offset="0.3757" stop-color="#df9fba"/><stop offset="0.3815" stop-color="#d199b7"/><stop offset="0.3873" stop-color="#c591b4"/><stop offset="0.3931" stop-color="#c191b0"/><stop offset="0.3988" stop-color="#bc909c"/><stop offset="0.4046" stop-color="#b78e8b"/><stop offset="0.4104" stop-color="#b99482"/><stop offset="0.4162" stop-color="#ab9995"/><stop offset="0.4220" stop-color="#9197a7"/><stop offset="0.4277" stop-color="#7e9bb9"/><stop offset="0.4335" stop-color="#85a5bf"/><stop offset="0.4393" stop-color="#b3ac9e"/><stop offset="0.4451" stop-color="#d7a977"/><stop offset="0.4509" stop-color="#f4a557"/><stop offset="0.4566" stop-color="#daab5d"/><stop offset="0.4624" stop-color="#acae64"/><stop offset="0.4682" stop-color="#88b465"/><stop offset="0.4740" stop-color="#78ba66"/><stop offset="0.4798" stop-color="#94b75b"/><stop offset="0.4855" stop-color="#afb450"/><stop offset="0.4913" stop-color="#cdb348"/><stop offset="0.4971" stop-color="#beb45e"/><stop offset="0.5029" stop-color="#9db37d"/><stop offset="0.5087" stop-color="#7bad94"/><stop offset="0.5145" stop-color="#74a7a2"/><stop offset="0.5202" stop-color="#aaa6a2"/><stop offset="0.5260" stop-color="#cb9e9a"/><stop offset="0.5318" stop-color="#c48a88"/><stop offset="0.5376" stop-color="#af8986"/><stop offset="0.5434" stop-color="#9a8e8c"/><stop offset="0.5491" stop-color="#b19198"/><stop offset="0.5549" stop-color="#ca91a2"/><stop offset="0.5607" stop-color="#ca84a1"/><stop offset="0.5665" stop-color="#c57fa3"/><stop offset="0.5723" stop-color="#c48db1"/><stop offset="0.5780" stop-color="#bf90ab"/><stop offset="0.5838" stop-color="#bb9099"/><stop offset="0.5896" stop-color="#a2878b"/><stop offset="0.5954" stop-color="#7c7c86"/><stop offset="0.6012" stop-color="#7a92ac"/><stop offset="0.6069" stop-color="#83a5c2"/><stop offset="0.6127" stop-color="#b6b7b2"/><stop offset="0.6185" stop-color="#d0bd98"/><stop offset="0.6243" stop-color="#bab16c"/><stop offset="0.6301" stop-color="#97b366"/><stop offset="0.6358" stop-color="#77b663"/><stop offset="0.6416" stop-color="#9ac267"/><stop offset="0.6474" stop-color="#c0ca6b"/><stop offset="0.6532" stop-color="#acbb73"/><stop offset="0.6590" stop-color="#96ab80"/><stop offset="0.6647" stop-color="#91887e"/><stop offset="0.6705" stop-color="#a67676"/><stop offset="0.6763" stop-color="#b46a69"/><stop offset="0.6821" stop-color="#a87a78"/><stop offset="0.6879" stop-color="#9f908e"/><stop offset="0.6936" stop-color="#bea3a7"/><stop offset="0.6994" stop-color="#dbb1bd"/><stop offset="0.7052" stop-color="#d8a1ba"/><stop offset="0.7110" stop-color="#cb95af"/><stop offset="0.7168" stop-color="#af7f8d"/><stop offset="0.7225" stop-color="#9e7e85"/><stop offset="0.7283" stop-color="#807c85"/><stop offset="0.7341" stop-color="#7b91a9"/><stop offset="0.7399" stop-color="#83a4c1"/><stop offset="0.7457" stop-color="#b4b7b3"/><stop offset="0.7514" stop-color="#cebf9b"/><stop offset="0.7572" stop-color="#c6c280"/><stop offset="0.7630" stop-color="#b8c673"/><stop offset="0.7688" stop-color="#b8cb6c"/><stop offset="0.7746" stop-color="#b1c071"/><stop offset="0.7803" stop-color="#9bb27c"/><stop offset="0.7861" stop-color="#95927d"/><stop offset="0.7919" stop-color="#a17978"/><stop offset="0.7977" stop-color="#ae6d6c"/><stop offset="0.8035" stop-color="#ad6e71"/><stop offset="0.8092" stop-color="#a87581"/><stop offset="0.8150" stop-color="#b87b92"/><stop offset="0.8208" stop-color="#c57c9f"/><stop offset="0.8266" stop-color="#b97e96"/><stop offset="0.8324" stop-color="#aa7d84"/><stop offset="0.8382" stop-color="#907d85"/><stop offset="0.8439" stop-color="#807f87"/><stop offset="0.8497" stop-color="#97877b"/><stop offset="0.8555" stop-color="#aa8f63"/><stop offset="0.8613" stop-color="#ae9b48"/><stop offset="0.8671" stop-color="#999f45"/><stop offset="0.8728" stop-color="#8ea143"/><stop offset="0.8786" stop-color="#8da053"/><stop offset="0.8844" stop-color="#859a68"/><stop offset="0.8902" stop-color="#908976"/><stop offset="0.8960" stop-color="#a17876"/><stop offset="0.9017" stop-color="#b06c6c"/><stop offset="0.9075" stop-color="#ad6f74"/><stop offset="0.9133" stop-color="#aa7785"/><stop offset="0.9191" stop-color="#ba7a94"/><stop offset="0.9249" stop-color="#c37c9f"/><stop offset="0.9306" stop-color="#b47d90"/><stop offset="0.9364" stop-color="#a37d84"/><stop offset="0.9422" stop-color="#877e87"/><stop offset="0.9480" stop-color="#89888e"/><stop offset="0.9538" stop-color="#a49b93"/><stop offset="0.9595" stop-color="#c3a68c"/><stop offset="0.9653" stop-color="#d8a78a"/><stop offset="0.9711" stop-color="#c69d99"/><stop offset="0.9769" stop-color="#bf96a2"/><stop offset="0.9827" stop-color="#c293a2"/><stop offset="0.9884" stop-color="#c491a1"/><stop offset="0.9942" stop-color="#c68ea0"/><stop offset="1.0000" stop-color="#c68ea0"/></radialGradient><radialGradient id="g2" cx="0" cy="0" r="52.5" gradientUnits="userSpaceOnUse"><stop offset="0.0000" stop-color="#4e79a7"/><stop offset="0.0057" stop-color="#4e79a7"/><stop offset="0.0114" stop-color="#4e79a7"/><stop offset="0.0171" stop-color="#4e79a7"/><stop offset="0.0229" stop-color="#4e79a7"/><stop offset="0.0286" stop-color="#4e79a7"/><stop offset="0.0343" stop-color="#4e79a7"/><stop offset="0.0400" stop-color="#4e79a7"/><stop offset="0.0457" stop-color="#4e79a7"/><stop offset="0.0514" stop-color="#4e79a7"/><stop offset="0.0571" stop-color="#4e79a7"/><stop offset="0.0629" stop-color="#4e79a7"/><stop offset="0.0686" stop-color="#4e79a7"/><stop offset="0.0743" stop-color="#4e79a7"/><stop offset="0.0800" stop-color="#4e79a7"/><stop offset="0.0857" stop-color="#4e79a7"/><stop offset="0.0914" stop-color="#4e79a7"/><stop offset="0.0971" stop-color="#618cb6"/><stop offset="0.1029" stop-color="#7aa5ca"/><stop offset="0.1086" stop-color="#92bddd"/><stop offset="0.1143" stop-color="#a0cbe8"/><stop offset="0.1200" stop-color="#a0cbe8"/><stop offset="0.1257" stop-color="#a0cbe8"/><stop offset="0.1314" stop-color="#a0cbe8"/><stop offset="0.1371" stop-color="#b1bfc2"/><stop offset="0.1429" stop-color="#c9ac89"/><stop offset="0.1486" stop-color="#e29a51"/><stop offset="0.1543" stop-color="#f18f2d"/><stop offset="0.1600" stop-color="#f28e2b"/><stop offset="0.1657" stop-color="#f39334"/><stop offset="0.1714" stop-color="#f7a14c"/><stop offset="0.1771" stop-color="#fbaf64"/><stop offset="0.1829" stop-color="#ffbc7a"/><stop offset="0.1886" stop-color="#ffbe7d"/><stop offset="0.1943" stop-color="#f9bd7b"/><stop offset="0.2000" stop-color="#c8b46e"/><stop offset="0.2057" stop-color="#96ac60"/><stop offset="0.2114" stop-color="#64a352"/><stop offset="0.2171" stop-color="#60a856"/><stop offset="0.2229" stop-color="#6fb663"/><stop offset="0.2286" stop-color="#7ec471"/><stop offset="0.2343" stop-color="#8ad07c"/><stop offset="0.2400" stop-color="#8cd17d"/><stop offset="0.2457" stop-color="#91ca73"/><stop offset="0.2514" stop-color="#9eb95b"/><stop offset="0.2571" stop-color="#b2af49"/><stop offset="0.2629" stop-color="#cdaf44"/><stop offset="0.2686" stop-color="#dfbe53"/><stop offset="0.2743" stop-color="#eecc61"/><stop offset="0.2800" stop-color="#c7c16f"/><stop offset="0.2857" stop-color="#95b07e"/><stop offset="0.2914" stop-color="#62a08d"/><stop offset="0.2971" stop-color="#509c98"/><stop offset="0.3029" stop-color="#62a7a2"/><stop offset="0.3086" stop-color="#75b2ac"/><stop offset="0.3143" stop-color="#89b8b3"/><stop offset="0.3200" stop-color="#a19e9a"/><stop offset="0.3257" stop-color="#bd817f"/><stop offset="0.3314" stop-color="#df7878"/><stop offset="0.3371" stop-color="#f38180"/><stop offset="0.3429" stop-color="#fa9693"/><stop offset="0.3486" stop-color="#e49491"/><stop offset="0.3543" stop-color="#bc8784"/><stop offset="0.3600" stop-color="#a28784"/><stop offset="0.3657" stop-color="#9b918e"/><stop offset="0.3714" stop-color="#b5959b"/><stop offset="0.3771" stop-color="#c88e9f"/><stop offset="0.3829" stop-color="#d07b99"/><stop offset="0.3886" stop-color="#d97e9f"/><stop offset="0.3943" stop-color="#e596b1"/><stop offset="0.4000" stop-color="#e29fba"/><stop offset="0.4057" stop-color="#d59cb9"/><stop offset="0.4114" stop-color="#c792b4"/><stop offset="0.4171" stop-color="#c391b4"/><stop offset="0.4229" stop-color="#be91a4"/><stop offset="0.4286" stop-color="#b88e90"/><stop offset="0.4343" stop-color="#b79183"/><stop offset="0.4400" stop-color="#c29f8d"/><stop offset="0.4457" stop-color="#cfb0a2"/><stop offset="0.4514" stop-color="#b2a5a6"/><stop offset="0.4571" stop-color="#8b95a9"/><stop offset="0.4629" stop-color="#7c9cbc"/><stop offset="0.4686" stop-color="#88a7bf"/><stop offset="0.4743" stop-color="#b9ac99"/><stop offset="0.4800" stop-color="#daa872"/><stop offset="0.4857" stop-color="#f5a556"/><stop offset="0.4914" stop-color="#d8ac5e"/><stop offset="0.4971" stop-color="#aab066"/><stop offset="0.5029" stop-color="#86b464"/><stop offset="0.5086" stop-color="#79ba66"/><stop offset="0.5143" stop-color="#95b85c"/><stop offset="0.5200" stop-color="#afb350"/><stop offset="0.5257" stop-color="#cdb348"/><stop offset="0.5314" stop-color="#c1b55d"/><stop offset="0.5371" stop-color="#a0b47c"/><stop offset="0.5429" stop-color="#7cad93"/><stop offset="0.5486" stop-color="#70a8a3"/><stop offset="0.5543" stop-color="#a4a5a1"/><stop offset="0.5600" stop-color="#ca9f9b"/><stop offset="0.5657" stop-color="#c78c89"/><stop offset="0.5714" stop-color="#b28784"/><stop offset="0.5771" stop-color="#9d8d8a"/><stop offset="0.5829" stop-color="#ac9195"/><stop offset="0.5886" stop-color="#c5909f"/><stop offset="0.5943" stop-color="#d894aa"/><stop offset="0.6000" stop-color="#e59ab5"/><stop offset="0.6057" stop-color="#db9db9"/><stop offset="0.6114" stop-color="#ca94af"/><stop offset="0.6171" stop-color="#b0808f"/><stop offset="0.6229" stop-color="#af8584"/><stop offset="0.6286" stop-color="#b99484"/><stop offset="0.6343" stop-color="#a89795"/><stop offset="0.6400" stop-color="#9097a8"/><stop offset="0.6457" stop-color="#809ebc"/><stop offset="0.6514" stop-color="#8ca8be"/><stop offset="0.6571" stop-color="#c0bbb0"/><stop offset="0.6629" stop-color="#cdba8f"/><stop offset="0.6686" stop-color="#b5b069"/><stop offset="0.6743" stop-color="#91b466"/><stop offset="0.6800" stop-color="#75b864"/><stop offset="0.6857" stop-color="#9fc469"/><stop offset="0.6914" stop-color="#c0c96b"/><stop offset="0.6971" stop-color="#abb973"/><stop offset="0.7029" stop-color="#96a87f"/><stop offset="0.7086" stop-color="#8f877f"/><stop offset="0.7143" stop-color="#b77b7a"/><stop offset="0.7200" stop-color="#ea7b7b"/><stop offset="0.7257" stop-color="#e18d8b"/><stop offset="0.7314" stop-color="#d4a39f"/><stop offset="0.7371" stop-color="#c6979e"/><stop offset="0.7429" stop-color="#cb91a2"/><stop offset="0.7486" stop-color="#de95ae"/><stop offset="0.7543" stop-color="#e49fba"/><stop offset="0.7600" stop-color="#e4aec9"/><stop offset="0.7657" stop-color="#d6a8bb"/><stop offset="0.7714" stop-color="#d1a9b0"/><stop offset="0.7771" stop-color="#ae9ea7"/><stop offset="0.7829" stop-color="#9195a2"/><stop offset="0.7886" stop-color="#988d85"/><stop offset="0.7943" stop-color="#b8916a"/><stop offset="0.8000" stop-color="#e9a35b"/><stop offset="0.8057" stop-color="#dfb162"/><stop offset="0.8114" stop-color="#c0c57a"/><stop offset="0.8171" stop-color="#b4c670"/><stop offset="0.8229" stop-color="#becb6b"/><stop offset="0.8286" stop-color="#acbb72"/><stop offset="0.8343" stop-color="#98aa7d"/><stop offset="0.8400" stop-color="#93897d"/><stop offset="0.8457" stop-color="#a47675"/><stop offset="0.8514" stop-color="#b46a6a"/><stop offset="0.8571" stop-color="#a87a79"/><stop offset="0.8629" stop-color="#a1908f"/><stop offset="0.8686" stop-color="#c0a4a9"/><stop offset="0.8743" stop-color="#dcb2be"/><stop offset="0.8800" stop-color="#e2aec6"/><stop offset="0.8857" stop-color="#ddacc3"/><stop offset="0.8914" stop-color="#d2a7b4"/><stop offset="0.8971" stop-color="#baa2ab"/><stop offset="0.9029" stop-color="#9598a5"/><stop offset="0.9086" stop-color="#98908d"/><stop offset="0.9143" stop-color="#a98b6b"/><stop offset="0.9200" stop-color="#af9751"/><stop offset="0.9257" stop-color="#a19e45"/><stop offset="0.9314" stop-color="#8ea145"/><stop offset="0.9371" stop-color="#8ea14b"/><stop offset="0.9429" stop-color="#8a9e5e"/><stop offset="0.9486" stop-color="#899171"/><stop offset="0.9543" stop-color="#997d79"/><stop offset="0.9600" stop-color="#bc7b7d"/><stop offset="0.9657" stop-color="#cf7f87"/><stop offset="0.9714" stop-color="#c7909b"/><stop offset="0.9771" stop-color="#c196a3"/><stop offset="0.9829" stop-color="#c293a2"/><stop offset="0.9886" stop-color="#c491a1"/><stop offset="0.9943" stop-color="#c68fa0"/><stop offset="1.0000" stop-color="#c68ea0"/></radialGradient><radialGradient id="g3" cx="0" cy="0" r="47.3" gradientUnits="userSpaceOnUse"><stop offset="0.0000" stop-color="#4e79a7"/><stop offset="0.0063" stop-color="#4e79a7"/><stop offset="0.0127" stop-color="#4e79a7"/><stop offset="0.0190" stop-color="#4e79a7"/><stop offset="0.0254" stop-color="#4e79a7"/><stop offset="0.0317" stop-color="#4e79a7"/><stop offset="0.0381" stop-color="#4e79a7"/><stop offset="0.0444" stop-color="#4e79a7"/><stop offset="0.0507" stop-color="#4e79a7"/><stop offset="0.0571" stop-color="#4e79a7"/><stop offset="0.0634" stop-color="#4e79a7"/><stop offset="0.0698" stop-color="#4e79a7"/><stop offset="0.0761" stop-color="#4e79a7"/><stop offset="0.0825" stop-color="#4e79a7"/><stop offset="0.0888" stop-color="#4e79a7"/><stop offset="0.0951" stop-color="#5c87b2"/><stop offset="0.1015" stop-color="#75a0c6"/><stop offset="0.1078" stop-color="#8db8d9"/><stop offset="0.1142" stop-color="#9fcae7"/><stop offset="0.1205" stop-color="#a0cbe8"/><stop offset="0.1268" stop-color="#a0cbe8"/><stop offset="0.1332" stop-color="#a1cae5"/><stop offset="0.1395" stop-color="#b2bec0"/><stop offset="0.1459" stop-color="#caac87"/><stop offset="0.1522" stop-color="#e3994e"/><stop offset="0.1586" stop-color="#f28e2c"/><stop offset="0.1649" stop-color="#f69c43"/><stop offset="0.1712" stop-color="#faaa5b"/><stop offset="0.1776" stop-color="#feb974"/><stop offset="0.1839" stop-color="#ecbb78"/><stop offset="0.1903" stop-color="#bdb36b"/><stop offset="0.1966" stop-color="#8baa5d"/><stop offset="0.2030" stop-color="#5fa251"/><stop offset="0.2093" stop-color="#65ac5a"/><stop offset="0.2156" stop-color="#74bb68"/><stop offset="0.2220" stop-color="#84c976"/><stop offset="0.2283" stop-color="#90cc75"/><stop offset="0.2347" stop-color="#9cbb5e"/><stop offset="0.2410" stop-color="#a9aa46"/><stop offset="0.2474" stop-color="#b69a2f"/><stop offset="0.2537" stop-color="#c6a73b"/><stop offset="0.2600" stop-color="#d6b64c"/><stop offset="0.2664" stop-color="#bab86a"/><stop offset="0.2727" stop-color="#90af7f"/><stop offset="0.2791" stop-color="#5d9e8e"/><stop offset="0.2854" stop-color="#549e9a"/><stop offset="0.2918" stop-color="#66a9a4"/><stop offset="0.2981" stop-color="#8b9f9c"/><stop offset="0.3044" stop-color="#b48987"/><stop offset="0.3108" stop-color="#d67c7b"/><stop offset="0.3171" stop-color="#f17d7c"/><stop offset="0.3235" stop-color="#fa928f"/><stop offset="0.3298" stop-color="#eb9693"/><stop offset="0.3362" stop-color="#c38986"/><stop offset="0.3425" stop-color="#a78885"/><stop offset="0.3488" stop-color="#99908d"/><stop offset="0.3552" stop-color="#b3939a"/><stop offset="0.3615" stop-color="#c88fa0"/><stop offset="0.3679" stop-color="#db93ab"/><stop offset="0.3742" stop-color="#e69cb7"/><stop offset="0.3805" stop-color="#db9eba"/><stop offset="0.3869" stop-color="#cd97b6"/><stop offset="0.3932" stop-color="#c28fb3"/><stop offset="0.3996" stop-color="#bf91a9"/><stop offset="0.4059" stop-color="#b88e94"/><stop offset="0.4123" stop-color="#b79088"/><stop offset="0.4186" stop-color="#b89788"/><stop offset="0.4249" stop-color="#a1989d"/><stop offset="0.4313" stop-color="#8998ae"/><stop offset="0.4376" stop-color="#789ec2"/><stop offset="0.4440" stop-color="#97a8b3"/><stop offset="0.4503" stop-color="#c7ad8c"/><stop offset="0.4567" stop-color="#e4a86a"/><stop offset="0.4630" stop-color="#f2a857"/><stop offset="0.4693" stop-color="#c4ad62"/><stop offset="0.4757" stop-color="#9eae60"/><stop offset="0.4820" stop-color="#87a54b"/><stop offset="0.4884" stop-color="#a1a744"/><stop offset="0.4947" stop-color="#ccb349"/><stop offset="0.5011" stop-color="#bdb45f"/><stop offset="0.5074" stop-color="#9ab17b"/><stop offset="0.5137" stop-color="#7bad95"/><stop offset="0.5201" stop-color="#78a8a3"/><stop offset="0.5264" stop-color="#ada7a2"/><stop offset="0.5328" stop-color="#c99c99"/><stop offset="0.5391" stop-color="#c38885"/><stop offset="0.5455" stop-color="#ad8a87"/><stop offset="0.5518" stop-color="#9c8f8d"/><stop offset="0.5581" stop-color="#bda2a6"/><stop offset="0.5645" stop-color="#dbb1bd"/><stop offset="0.5708" stop-color="#d9a2ba"/><stop offset="0.5772" stop-color="#d099b7"/><stop offset="0.5835" stop-color="#c491b3"/><stop offset="0.5899" stop-color="#c698b0"/><stop offset="0.5962" stop-color="#d1a9b1"/><stop offset="0.6025" stop-color="#b19fa8"/><stop offset="0.6089" stop-color="#9098a9"/><stop offset="0.6152" stop-color="#968e89"/><stop offset="0.6216" stop-color="#ab8d68"/><stop offset="0.6279" stop-color="#b3984e"/><stop offset="0.6342" stop-color="#9ba34d"/><stop offset="0.6406" stop-color="#7db664"/><stop offset="0.6469" stop-color="#91bf67"/><stop offset="0.6533" stop-color="#bdcc6b"/><stop offset="0.6596" stop-color="#afbd71"/><stop offset="0.6660" stop-color="#98ae7e"/><stop offset="0.6723" stop-color="#938d7d"/><stop offset="0.6786" stop-color="#a37776"/><stop offset="0.6850" stop-color="#b26b6b"/><stop offset="0.6913" stop-color="#a97775"/><stop offset="0.6977" stop-color="#9e8e8c"/><stop offset="0.7040" stop-color="#bba1a5"/><stop offset="0.7104" stop-color="#dab2bd"/><stop offset="0.7167" stop-color="#e1aec4"/><stop offset="0.7230" stop-color="#deacc4"/><stop offset="0.7294" stop-color="#d3a8b6"/><stop offset="0.7357" stop-color="#c8adb4"/><stop offset="0.7421" stop-color="#b7b7bd"/><stop offset="0.7484" stop-color="#bab5ad"/><stop offset="0.7548" stop-color="#c7ab89"/><stop offset="0.7611" stop-color="#baa25e"/><stop offset="0.7674" stop-color="#a29d45"/><stop offset="0.7738" stop-color="#8fa044"/><stop offset="0.7801" stop-color="#90a248"/><stop offset="0.7865" stop-color="#8a9e5c"/><stop offset="0.7928" stop-color="#899370"/><stop offset="0.7992" stop-color="#957f7c"/><stop offset="0.8055" stop-color="#a97271"/><stop offset="0.8118" stop-color="#af6b6a"/><stop offset="0.8182" stop-color="#ab737c"/><stop offset="0.8245" stop-color="#b1798c"/><stop offset="0.8309" stop-color="#c17c9b"/><stop offset="0.8372" stop-color="#be7d9a"/><stop offset="0.8436" stop-color="#ae7e8a"/><stop offset="0.8499" stop-color="#977d85"/><stop offset="0.8562" stop-color="#7c7e8a"/><stop offset="0.8626" stop-color="#94908f"/><stop offset="0.8689" stop-color="#b1a28d"/><stop offset="0.8753" stop-color="#bfb97d"/><stop offset="0.8816" stop-color="#bcc574"/><stop offset="0.8879" stop-color="#b7ca6d"/><stop offset="0.8943" stop-color="#bac777"/><stop offset="0.9006" stop-color="#b9bf87"/><stop offset="0.9070" stop-color="#b9b299"/><stop offset="0.9133" stop-color="#c3a4a0"/><stop offset="0.9197" stop-color="#da9198"/><stop offset="0.9260" stop-color="#db8699"/><stop offset="0.9323" stop-color="#c97e9d"/><stop offset="0.9387" stop-color="#bd7d99"/><stop offset="0.9450" stop-color="#ae7e8a"/><stop offset="0.9514" stop-color="#aa8285"/><stop offset="0.9577" stop-color="#ac8b8a"/><stop offset="0.9641" stop-color="#b6949d"/><stop offset="0.9704" stop-color="#bc98a6"/><stop offset="0.9767" stop-color="#c195a3"/><stop offset="0.9831" stop-color="#c392a2"/><stop offset="0.9894" stop-color="#c490a1"/><stop offset="0.9958" stop-color="#c68ea0"/><stop offset="1.0000" stop-color="#c68ea0"/></radialGradient><radialGradient id="g4" cx="0" cy="0" r="33.1" gradientUnits="userSpaceOnUse"><stop offset="0.0000" stop-color="#4e79a7"/><stop offset="0.0091" stop-color="#4e79a7"/><stop offset="0.0181" stop-color="#4e79a7"/><stop offset="0.0272" stop-color="#4e79a7"/><stop offset="0.0363" stop-color="#4e79a7"/><stop offset="0.0453" stop-color="#4e79a7"/><stop offset="0.0544" stop-color="#4e79a7"/><stop offset="0.0634" stop-color="#4e79a7"/><stop offset="0.0725" stop-color="#4e79a7"/><stop offset="0.0816" stop-color="#4e79a7"/><stop offset="0.0906" stop-color="#4f7aa7"/><stop offset="0.0997" stop-color="#5883af"/><stop offset="0.1088" stop-color="#719cc3"/><stop offset="0.1178" stop-color="#89b4d6"/><stop offset="0.1269" stop-color="#9fc9e5"/><stop offset="0.1360" stop-color="#b3bdbc"/><stop offset="0.1450" stop-color="#ccab83"/><stop offset="0.1541" stop-color="#e4984b"/><stop offset="0.1631" stop-color="#f39233"/><stop offset="0.1722" stop-color="#f7a14b"/><stop offset="0.1813" stop-color="#eaac5f"/><stop offset="0.1903" stop-color="#bcb067"/><stop offset="0.1994" stop-color="#92b063"/><stop offset="0.2085" stop-color="#70b663"/><stop offset="0.2175" stop-color="#7ec471"/><stop offset="0.2266" stop-color="#8dcd77"/><stop offset="0.2356" stop-color="#9bbd61"/><stop offset="0.2447" stop-color="#aeb24e"/><stop offset="0.2538" stop-color="#cbb349"/><stop offset="0.2628" stop-color="#c3b55c"/><stop offset="0.2719" stop-color="#a1b479"/><stop offset="0.2810" stop-color="#7ead91"/><stop offset="0.2900" stop-color="#6ca8a4"/><stop offset="0.2991" stop-color="#989794"/><stop offset="0.3082" stop-color="#bc8382"/><stop offset="0.3172" stop-color="#bc6f6e"/><stop offset="0.3263" stop-color="#ab7271"/><stop offset="0.3353" stop-color="#9e8a87"/><stop offset="0.3444" stop-color="#aa9195"/><stop offset="0.3535" stop-color="#c592a0"/><stop offset="0.3625" stop-color="#d895aa"/><stop offset="0.3716" stop-color="#e59ab5"/><stop offset="0.3807" stop-color="#e4a8c3"/><stop offset="0.3897" stop-color="#d9a7bf"/><stop offset="0.3988" stop-color="#c0949f"/><stop offset="0.4079" stop-color="#a88a8e"/><stop offset="0.4169" stop-color="#807c84"/><stop offset="0.4260" stop-color="#7a8fa6"/><stop offset="0.4350" stop-color="#7fa2c1"/><stop offset="0.4441" stop-color="#b0b5b4"/><stop offset="0.4532" stop-color="#d0c09e"/><stop offset="0.4622" stop-color="#c7c281"/><stop offset="0.4713" stop-color="#b9c675"/><stop offset="0.4804" stop-color="#b6ca6d"/><stop offset="0.4894" stop-color="#b3c270"/><stop offset="0.4985" stop-color="#9fb379"/><stop offset="0.5076" stop-color="#95967d"/><stop offset="0.5166" stop-color="#9e7b79"/><stop offset="0.5257" stop-color="#ad6e6e"/><stop offset="0.5347" stop-color="#ad6d6f"/><stop offset="0.5438" stop-color="#a87480"/><stop offset="0.5529" stop-color="#b57990"/><stop offset="0.5619" stop-color="#c57c9e"/><stop offset="0.5710" stop-color="#b97d95"/><stop offset="0.5801" stop-color="#ab7d85"/><stop offset="0.5891" stop-color="#a39095"/><stop offset="0.5982" stop-color="#a4a5a8"/><stop offset="0.6073" stop-color="#bfb8ac"/><stop offset="0.6163" stop-color="#cabf9a"/><stop offset="0.6254" stop-color="#c6c27a"/><stop offset="0.6344" stop-color="#bbc773"/><stop offset="0.6435" stop-color="#b7ca6e"/><stop offset="0.6526" stop-color="#cdaf69"/><stop offset="0.6616" stop-color="#db8f65"/><stop offset="0.6707" stop-color="#bc7569"/><stop offset="0.6798" stop-color="#b07274"/><stop offset="0.6888" stop-color="#b88e95"/><stop offset="0.6979" stop-color="#cba0b0"/><stop offset="0.7069" stop-color="#e2acc5"/><stop offset="0.7160" stop-color="#bfa0bd"/><stop offset="0.7251" stop-color="#9291b4"/><stop offset="0.7341" stop-color="#9e979d"/><stop offset="0.7432" stop-color="#afa38c"/><stop offset="0.7523" stop-color="#c0bb7d"/><stop offset="0.7613" stop-color="#adc079"/><stop offset="0.7704" stop-color="#7bb782"/><stop offset="0.7795" stop-color="#89a789"/><stop offset="0.7885" stop-color="#a59994"/><stop offset="0.7976" stop-color="#cb9096"/><stop offset="0.8066" stop-color="#e2899a"/><stop offset="0.8157" stop-color="#d68ca8"/><stop offset="0.8248" stop-color="#c88faf"/><stop offset="0.8338" stop-color="#a291b4"/><stop offset="0.8429" stop-color="#9994a5"/><stop offset="0.8520" stop-color="#a39c91"/><stop offset="0.8610" stop-color="#c0a874"/><stop offset="0.8701" stop-color="#d0ac55"/><stop offset="0.8792" stop-color="#c59350"/><stop offset="0.8882" stop-color="#c97f55"/><stop offset="0.8973" stop-color="#c78278"/><stop offset="0.9063" stop-color="#c78b8f"/><stop offset="0.9154" stop-color="#b995a4"/><stop offset="0.9245" stop-color="#a78ba5"/><stop offset="0.9335" stop-color="#887fa5"/><stop offset="0.9426" stop-color="#8986a2"/><stop offset="0.9517" stop-color="#968da4"/><stop offset="0.9607" stop-color="#b494a3"/><stop offset="0.9698" stop-color="#c294a2"/><stop offset="0.9789" stop-color="#c392a1"/><stop offset="0.9879" stop-color="#c58fa1"/><stop offset="0.9970" stop-color="#c68ea0"/><stop offset="1.0000" stop-color="#c68ea0"/></radialGradient><radialGradient id="g5" cx="0" cy="0" r="38.5" gradientUnits="userSpaceOnUse"><stop offset="0.0000" stop-color="#4e79a7"/><stop offset="0.0078" stop-color="#4e79a7"/><stop offset="0.0156" stop-color="#4e79a7"/><stop offset="0.0234" stop-color="#4e79a7"/><stop offset="0.0312" stop-color="#4e79a7"/><stop offset="0.0390" stop-color="#4e79a7"/><stop offset="0.0468" stop-color="#4e79a7"/><stop offset="0.0545" stop-color="#4e79a7"/><stop offset="0.0623" stop-color="#4e79a7"/><stop offset="0.0701" stop-color="#4e79a7"/><stop offset="0.0779" stop-color="#4e79a7"/><stop offset="0.0857" stop-color="#4e79a7"/><stop offset="0.0935" stop-color="#4f7aa8"/><stop offset="0.1013" stop-color="#5d88b3"/><stop offset="0.1091" stop-color="#76a1c6"/><stop offset="0.1169" stop-color="#8eb9da"/><stop offset="0.1247" stop-color="#a0cbe8"/><stop offset="0.1325" stop-color="#b4bcba"/><stop offset="0.1403" stop-color="#cdaa81"/><stop offset="0.1481" stop-color="#e59748"/><stop offset="0.1558" stop-color="#f39232"/><stop offset="0.1636" stop-color="#f7a04a"/><stop offset="0.1714" stop-color="#fbae62"/><stop offset="0.1792" stop-color="#ffbc7a"/><stop offset="0.1870" stop-color="#d9b773"/><stop offset="0.1948" stop-color="#a7af65"/><stop offset="0.2026" stop-color="#76a657"/><stop offset="0.2104" stop-color="#5ea654"/><stop offset="0.2182" stop-color="#6eb462"/><stop offset="0.2260" stop-color="#82bc65"/><stop offset="0.2338" stop-color="#9db85a"/><stop offset="0.2416" stop-color="#b4b14c"/><stop offset="0.2494" stop-color="#d0b247"/><stop offset="0.2571" stop-color="#e3c156"/><stop offset="0.2649" stop-color="#e3c865"/><stop offset="0.2727" stop-color="#b3ba75"/><stop offset="0.2805" stop-color="#88ae88"/><stop offset="0.2883" stop-color="#6aaaa0"/><stop offset="0.2961" stop-color="#86a09c"/><stop offset="0.3039" stop-color="#b28c89"/><stop offset="0.3117" stop-color="#d47e7d"/><stop offset="0.3195" stop-color="#f07c7c"/><stop offset="0.3273" stop-color="#d18482"/><stop offset="0.3351" stop-color="#b38784"/><stop offset="0.3429" stop-color="#9e8d8a"/><stop offset="0.3506" stop-color="#a99295"/><stop offset="0.3584" stop-color="#c493a0"/><stop offset="0.3662" stop-color="#d693a9"/><stop offset="0.3740" stop-color="#e599b4"/><stop offset="0.3818" stop-color="#dc9cb8"/><stop offset="0.3896" stop-color="#ce97b3"/><stop offset="0.3974" stop-color="#b48395"/><stop offset="0.4052" stop-color="#ad8184"/><stop offset="0.4130" stop-color="#b89284"/><stop offset="0.4208" stop-color="#ab9691"/><stop offset="0.4286" stop-color="#9598a7"/><stop offset="0.4364" stop-color="#939093"/><stop offset="0.4442" stop-color="#a88b6f"/><stop offset="0.4519" stop-color="#dc9f61"/><stop offset="0.4597" stop-color="#e8a95b"/><stop offset="0.4675" stop-color="#bcae63"/><stop offset="0.4753" stop-color="#9aac5c"/><stop offset="0.4831" stop-color="#86a144"/><stop offset="0.4909" stop-color="#aeab46"/><stop offset="0.4987" stop-color="#cdb34d"/><stop offset="0.5065" stop-color="#bfbc73"/><stop offset="0.5143" stop-color="#b1bc91"/><stop offset="0.5221" stop-color="#b8ac9e"/><stop offset="0.5299" stop-color="#c69d9a"/><stop offset="0.5377" stop-color="#c28886"/><stop offset="0.5455" stop-color="#b28185"/><stop offset="0.5532" stop-color="#a77584"/><stop offset="0.5610" stop-color="#bd7c96"/><stop offset="0.5688" stop-color="#c47ca0"/><stop offset="0.5766" stop-color="#c48baf"/><stop offset="0.5844" stop-color="#c595b1"/><stop offset="0.5922" stop-color="#cea5b2"/><stop offset="0.6000" stop-color="#c3adb4"/><stop offset="0.6078" stop-color="#b7b9c0"/><stop offset="0.6156" stop-color="#bdbcb7"/><stop offset="0.6234" stop-color="#cfc0a7"/><stop offset="0.6312" stop-color="#c8c186"/><stop offset="0.6390" stop-color="#bbc576"/><stop offset="0.6468" stop-color="#b6c96e"/><stop offset="0.6545" stop-color="#bbc873"/><stop offset="0.6623" stop-color="#b9c184"/><stop offset="0.6701" stop-color="#b7b496"/><stop offset="0.6779" stop-color="#bfa6a2"/><stop offset="0.6857" stop-color="#d1a19e"/><stop offset="0.6935" stop-color="#d6a3a1"/><stop offset="0.7013" stop-color="#d4adb2"/><stop offset="0.7091" stop-color="#dcb1bf"/><stop offset="0.7169" stop-color="#e2aec5"/><stop offset="0.7247" stop-color="#c8a3be"/><stop offset="0.7325" stop-color="#9991b3"/><stop offset="0.7403" stop-color="#968c94"/><stop offset="0.7481" stop-color="#a88b6e"/><stop offset="0.7558" stop-color="#ab9555"/><stop offset="0.7636" stop-color="#a5a048"/><stop offset="0.7714" stop-color="#a3b155"/><stop offset="0.7792" stop-color="#acbb67"/><stop offset="0.7870" stop-color="#b8bf83"/><stop offset="0.7948" stop-color="#a4ae8f"/><stop offset="0.8026" stop-color="#899491"/><stop offset="0.8104" stop-color="#9e8187"/><stop offset="0.8182" stop-color="#b27a8b"/><stop offset="0.8260" stop-color="#c787a3"/><stop offset="0.8338" stop-color="#d293af"/><stop offset="0.8416" stop-color="#d0a5b3"/><stop offset="0.8494" stop-color="#cfa69e"/><stop offset="0.8571" stop-color="#d8a174"/><stop offset="0.8649" stop-color="#c19d5b"/><stop offset="0.8727" stop-color="#a49e49"/><stop offset="0.8805" stop-color="#a4ad52"/><stop offset="0.8883" stop-color="#acb35d"/><stop offset="0.8961" stop-color="#d19e62"/><stop offset="0.9039" stop-color="#d78d6e"/><stop offset="0.9117" stop-color="#cb8581"/><stop offset="0.9195" stop-color="#d1989c"/><stop offset="0.9273" stop-color="#d5b0b9"/><stop offset="0.9351" stop-color="#d2a3aa"/><stop offset="0.9429" stop-color="#c59797"/><stop offset="0.9506" stop-color="#b38c8a"/><stop offset="0.9584" stop-color="#b28c8e"/><stop offset="0.9662" stop-color="#bb94a0"/><stop offset="0.9740" stop-color="#c294a2"/><stop offset="0.9818" stop-color="#c392a1"/><stop offset="0.9896" stop-color="#c58fa0"/><stop offset="0.9974" stop-color="#c68ea0"/><stop offset="1.0000" stop-color="#c68ea0"/></radialGradient><radialGradient id="g6" cx="0" cy="0" r="52.5" gradientUnits="userSpaceOnUse"><stop offset="0.0000" stop-color="#4e79a7"/><stop offset="0.0057" stop-color="#4e79a7"/><stop offset="0.0114" stop-color="#4e79a7"/><stop offset="0.0171" stop-color="#4e79a7"/><stop offset="0.0229" stop-color="#4e79a7"/><stop offset="0.0286" stop-color="#4e79a7"/><stop offset="0.0343" stop-color="#4e79a7"/><stop offset="0.0400" stop-color="#4e79a7"/><stop offset="0.0457" stop-color="#4e79a7"/><stop offset="0.0514" stop-color="#4e79a7"/><stop offset="0.0571" stop-color="#4e79a7"/><stop offset="0.0629" stop-color="#4e79a7"/><stop offset="0.0686" stop-color="#4e79a7"/><stop offset="0.0743" stop-color="#4e79a7"/><stop offset="0.0800" stop-color="#4e79a7"/><stop offset="0.0857" stop-color="#4e79a7"/><stop offset="0.0914" stop-color="#4e79a7"/><stop offset="0.0971" stop-color="#618cb6"/><stop offset="0.1029" stop-color="#7aa5ca"/><stop offset="0.1086" stop-color="#92bddd"/><stop offset="0.1143" stop-color="#a0cbe8"/><stop offset="0.1200" stop-color="#a0cbe8"/><stop offset="0.1257" stop-color="#a0cbe8"/><stop offset="0.1314" stop-color="#a0cbe8"/><stop offset="0.1371" stop-color="#b0bfc3"/><stop offset="0.1429" stop-color="#c9ad8b"/><stop offset="0.1486" stop-color="#e19b52"/><stop offset="0.1543" stop-color="#f08f2e"/><stop offset="0.1600" stop-color="#f28e2b"/><stop offset="0.1657" stop-color="#f28e2b"/><stop offset="0.1714" stop-color="#f28f2d"/><stop offset="0.1771" stop-color="#f59a40"/><stop offset="0.1829" stop-color="#f9a959"/><stop offset="0.1886" stop-color="#fdb771"/><stop offset="0.1943" stop-color="#f9bd7b"/><stop offset="0.2000" stop-color="#cab56e"/><stop offset="0.2057" stop-color="#98ac61"/><stop offset="0.2114" stop-color="#67a353"/><stop offset="0.2171" stop-color="#59a14f"/><stop offset="0.2229" stop-color="#5aa250"/><stop offset="0.2286" stop-color="#68af5c"/><stop offset="0.2343" stop-color="#77bd6a"/><stop offset="0.2400" stop-color="#86cb77"/><stop offset="0.2457" stop-color="#91cb74"/><stop offset="0.2514" stop-color="#9dba5c"/><stop offset="0.2571" stop-color="#aaa944"/><stop offset="0.2629" stop-color="#b69b2f"/><stop offset="0.2686" stop-color="#c5a63a"/><stop offset="0.2743" stop-color="#d6b64b"/><stop offset="0.2800" stop-color="#e8c65b"/><stop offset="0.2857" stop-color="#e1c968"/><stop offset="0.2914" stop-color="#aeb976"/><stop offset="0.2971" stop-color="#82ac88"/><stop offset="0.3029" stop-color="#68a89f"/><stop offset="0.3086" stop-color="#73b1ab"/><stop offset="0.3143" stop-color="#85bbb5"/><stop offset="0.3200" stop-color="#9ea19d"/><stop offset="0.3257" stop-color="#ba8482"/><stop offset="0.3314" stop-color="#dd7877"/><stop offset="0.3371" stop-color="#f27f7e"/><stop offset="0.3429" stop-color="#fb9492"/><stop offset="0.3486" stop-color="#e99693"/><stop offset="0.3543" stop-color="#c18886"/><stop offset="0.3600" stop-color="#a58784"/><stop offset="0.3657" stop-color="#998f8c"/><stop offset="0.3714" stop-color="#aca29f"/><stop offset="0.3771" stop-color="#bcaaa9"/><stop offset="0.3829" stop-color="#c498a3"/><stop offset="0.3886" stop-color="#d08fa4"/><stop offset="0.3943" stop-color="#e395b0"/><stop offset="0.4000" stop-color="#e49fb9"/><stop offset="0.4057" stop-color="#d8a0bc"/><stop offset="0.4114" stop-color="#c28bad"/><stop offset="0.4171" stop-color="#b47ea5"/><stop offset="0.4229" stop-color="#be8bb0"/><stop offset="0.4286" stop-color="#c292af"/><stop offset="0.4343" stop-color="#bb8f9a"/><stop offset="0.4400" stop-color="#b68e89"/><stop offset="0.4457" stop-color="#b99482"/><stop offset="0.4514" stop-color="#ab9996"/><stop offset="0.4571" stop-color="#8f95a7"/><stop offset="0.4629" stop-color="#7d9ab9"/><stop offset="0.4686" stop-color="#81a6c4"/><stop offset="0.4743" stop-color="#b1ada1"/><stop offset="0.4800" stop-color="#d5a979"/><stop offset="0.4857" stop-color="#f2a558"/><stop offset="0.4914" stop-color="#e0ab5d"/><stop offset="0.4971" stop-color="#b2b066"/><stop offset="0.5029" stop-color="#8cb364"/><stop offset="0.5086" stop-color="#77b966"/><stop offset="0.5143" stop-color="#90b85d"/><stop offset="0.5200" stop-color="#aab451"/><stop offset="0.5257" stop-color="#c7b249"/><stop offset="0.5314" stop-color="#c6b558"/><stop offset="0.5371" stop-color="#a5b476"/><stop offset="0.5429" stop-color="#82ae8e"/><stop offset="0.5486" stop-color="#6aaba5"/><stop offset="0.5543" stop-color="#949895"/><stop offset="0.5600" stop-color="#bd8583"/><stop offset="0.5657" stop-color="#e17c7b"/><stop offset="0.5714" stop-color="#e27f7e"/><stop offset="0.5771" stop-color="#c38684"/><stop offset="0.5829" stop-color="#aa8a87"/><stop offset="0.5886" stop-color="#9b908e"/><stop offset="0.5943" stop-color="#b6929a"/><stop offset="0.6000" stop-color="#ca8fa2"/><stop offset="0.6057" stop-color="#c982a0"/><stop offset="0.6114" stop-color="#c581a5"/><stop offset="0.6171" stop-color="#c48eb2"/><stop offset="0.6229" stop-color="#bf90aa"/><stop offset="0.6286" stop-color="#ba8f97"/><stop offset="0.6343" stop-color="#b9918a"/><stop offset="0.6400" stop-color="#b89787"/><stop offset="0.6457" stop-color="#b5acad"/><stop offset="0.6514" stop-color="#b1b9c0"/><stop offset="0.6571" stop-color="#bcaf9c"/><stop offset="0.6629" stop-color="#d7a978"/><stop offset="0.6686" stop-color="#f2a658"/><stop offset="0.6743" stop-color="#deb364"/><stop offset="0.6800" stop-color="#bec479"/><stop offset="0.6857" stop-color="#a6bc66"/><stop offset="0.6914" stop-color="#a4b352"/><stop offset="0.6971" stop-color="#c4b44c"/><stop offset="0.7029" stop-color="#c9b659"/><stop offset="0.7086" stop-color="#b9c081"/><stop offset="0.7143" stop-color="#acae8f"/><stop offset="0.7200" stop-color="#ad8c8a"/><stop offset="0.7257" stop-color="#d38180"/><stop offset="0.7314" stop-color="#eb7c7b"/><stop offset="0.7371" stop-color="#dd9592"/><stop offset="0.7429" stop-color="#cfa09f"/><stop offset="0.7486" stop-color="#c695a0"/><stop offset="0.7543" stop-color="#ca8ca2"/><stop offset="0.7600" stop-color="#c77c9f"/><stop offset="0.7657" stop-color="#c486aa"/><stop offset="0.7714" stop-color="#c290b2"/><stop offset="0.7771" stop-color="#ca9eb1"/><stop offset="0.7829" stop-color="#cba8ae"/><stop offset="0.7886" stop-color="#a49ca7"/><stop offset="0.7943" stop-color="#9295a0"/><stop offset="0.8000" stop-color="#9a8a7b"/><stop offset="0.8057" stop-color="#b0925f"/><stop offset="0.8114" stop-color="#b09b44"/><stop offset="0.8171" stop-color="#90aa56"/><stop offset="0.8229" stop-color="#7dba66"/><stop offset="0.8286" stop-color="#a3c469"/><stop offset="0.8343" stop-color="#bbc76d"/><stop offset="0.8400" stop-color="#a7b776"/><stop offset="0.8457" stop-color="#95a37f"/><stop offset="0.8514" stop-color="#91807d"/><stop offset="0.8571" stop-color="#ab7473"/><stop offset="0.8629" stop-color="#b16968"/><stop offset="0.8686" stop-color="#a5817f"/><stop offset="0.8743" stop-color="#a69393"/><stop offset="0.8800" stop-color="#caaab0"/><stop offset="0.8857" stop-color="#ddafbf"/><stop offset="0.8914" stop-color="#e3afc8"/><stop offset="0.8971" stop-color="#d9a9bd"/><stop offset="0.9029" stop-color="#d1a9b2"/><stop offset="0.9086" stop-color="#b09fa9"/><stop offset="0.9143" stop-color="#9097a7"/><stop offset="0.9200" stop-color="#9a8d84"/><stop offset="0.9257" stop-color="#ad8f66"/><stop offset="0.9314" stop-color="#ae984a"/><stop offset="0.9371" stop-color="#9b9f46"/><stop offset="0.9429" stop-color="#89a144"/><stop offset="0.9486" stop-color="#8fa14f"/><stop offset="0.9543" stop-color="#859d63"/><stop offset="0.9600" stop-color="#859d86"/><stop offset="0.9657" stop-color="#909a9d"/><stop offset="0.9714" stop-color="#b198a3"/><stop offset="0.9771" stop-color="#c096a3"/><stop offset="0.9829" stop-color="#c293a2"/><stop offset="0.9886" stop-color="#c491a1"/><stop offset="0.9943" stop-color="#c68fa0"/><stop offset="1.0000" stop-color="#c68ea0"/></radialGradient><radialGradient id="g7" cx="0" cy="0" r="50.7" gradientUnits="userSpaceOnUse"><stop offset="0.0000" stop-color="#4e79a7"/><stop offset="0.0059" stop-color="#4e79a7"/><stop offset="0.0118" stop-color="#4e79a7"/><stop offset="0.0178" stop-color="#4e79a7"/><stop offset="0.0237" stop-color="#4e79a7"/><stop offset="0.0296" stop-color="#4e79a7"/><stop offset="0.0355" stop-color="#4e79a7"/><stop offset="0.0414" stop-color="#4e79a7"/><stop offset="0.0473" stop-color="#4e79a7"/><stop offset="0.0533" stop-color="#4e79a7"/><stop offset="0.0592" stop-color="#4e79a7"/><stop offset="0.0651" stop-color="#4e79a7"/><stop offset="0.0710" stop-color="#4e79a7"/><stop offset="0.0769" stop-color="#4e79a7"/><stop offset="0.0828" stop-color="#4e79a7"/><stop offset="0.0888" stop-color="#4e79a7"/><stop offset="0.0947" stop-color="#4e79a7"/><stop offset="0.1006" stop-color="#648fb9"/><stop offset="0.1065" stop-color="#7da8cc"/><stop offset="0.1124" stop-color="#96c1e0"/><stop offset="0.1183" stop-color="#a0cbe8"/><stop offset="0.1243" stop-color="#a0cbe8"/><stop offset="0.1302" stop-color="#a0cbe8"/><stop offset="0.1361" stop-color="#a2c9e3"/><stop offset="0.1420" stop-color="#b7bab3"/><stop offset="0.1479" stop-color="#d0a87a"/><stop offset="0.1538" stop-color="#e89643"/><stop offset="0.1598" stop-color="#f39130"/><stop offset="0.1657" stop-color="#f69d45"/><stop offset="0.1716" stop-color="#faac5e"/><stop offset="0.1775" stop-color="#feba77"/><stop offset="0.1834" stop-color="#ffbe7d"/><stop offset="0.1893" stop-color="#ffbe7d"/><stop offset="0.1953" stop-color="#d0b670"/><stop offset="0.2012" stop-color="#9ead62"/><stop offset="0.2071" stop-color="#6ca454"/><stop offset="0.2130" stop-color="#5ea654"/><stop offset="0.2189" stop-color="#6eb462"/><stop offset="0.2249" stop-color="#7dc36f"/><stop offset="0.2308" stop-color="#8cd17d"/><stop offset="0.2367" stop-color="#96c369"/><stop offset="0.2426" stop-color="#a3b251"/><stop offset="0.2485" stop-color="#b0a239"/><stop offset="0.2544" stop-color="#bc9e32"/><stop offset="0.2604" stop-color="#ceae43"/><stop offset="0.2663" stop-color="#dfbe53"/><stop offset="0.2722" stop-color="#eacb64"/><stop offset="0.2781" stop-color="#c4bf70"/><stop offset="0.2840" stop-color="#91af7f"/><stop offset="0.2899" stop-color="#73aa96"/><stop offset="0.2959" stop-color="#6cada8"/><stop offset="0.3018" stop-color="#7fb7b1"/><stop offset="0.3077" stop-color="#95aba7"/><stop offset="0.3136" stop-color="#b08d8b"/><stop offset="0.3195" stop-color="#d17c7b"/><stop offset="0.3254" stop-color="#f07978"/><stop offset="0.3314" stop-color="#dc8483"/><stop offset="0.3373" stop-color="#ba8683"/><stop offset="0.3432" stop-color="#927876"/><stop offset="0.3491" stop-color="#827876"/><stop offset="0.3550" stop-color="#948b88"/><stop offset="0.3609" stop-color="#ac9497"/><stop offset="0.3669" stop-color="#c593a1"/><stop offset="0.3728" stop-color="#d591a7"/><stop offset="0.3787" stop-color="#e799b4"/><stop offset="0.3846" stop-color="#e09fba"/><stop offset="0.3905" stop-color="#d39bb9"/><stop offset="0.3964" stop-color="#c692b4"/><stop offset="0.4024" stop-color="#c695b9"/><stop offset="0.4083" stop-color="#cfa1c2"/><stop offset="0.4142" stop-color="#c79baf"/><stop offset="0.4201" stop-color="#b88e92"/><stop offset="0.4260" stop-color="#b79186"/><stop offset="0.4320" stop-color="#b8988a"/><stop offset="0.4379" stop-color="#9f989e"/><stop offset="0.4438" stop-color="#8798af"/><stop offset="0.4497" stop-color="#7a9fc2"/><stop offset="0.4556" stop-color="#99a9b2"/><stop offset="0.4615" stop-color="#c8ad8c"/><stop offset="0.4675" stop-color="#e4a768"/><stop offset="0.4734" stop-color="#f3a857"/><stop offset="0.4793" stop-color="#c6ae62"/><stop offset="0.4852" stop-color="#9dae61"/><stop offset="0.4911" stop-color="#89a54d"/><stop offset="0.4970" stop-color="#9da644"/><stop offset="0.5030" stop-color="#c8b147"/><stop offset="0.5089" stop-color="#c2b45a"/><stop offset="0.5148" stop-color="#a0b378"/><stop offset="0.5207" stop-color="#7fad91"/><stop offset="0.5266" stop-color="#6fa9a3"/><stop offset="0.5325" stop-color="#9b9592"/><stop offset="0.5385" stop-color="#c38482"/><stop offset="0.5444" stop-color="#e67a79"/><stop offset="0.5503" stop-color="#e48887"/><stop offset="0.5562" stop-color="#d7a19d"/><stop offset="0.5621" stop-color="#c79a9e"/><stop offset="0.5680" stop-color="#c48f9e"/><stop offset="0.5740" stop-color="#da95ac"/><stop offset="0.5799" stop-color="#e49ab5"/><stop offset="0.5858" stop-color="#da9db9"/><stop offset="0.5917" stop-color="#c893ac"/><stop offset="0.5976" stop-color="#ad7e8c"/><stop offset="0.6036" stop-color="#b18784"/><stop offset="0.6095" stop-color="#b99685"/><stop offset="0.6154" stop-color="#a49798"/><stop offset="0.6213" stop-color="#8f97a7"/><stop offset="0.6272" stop-color="#968c86"/><stop offset="0.6331" stop-color="#b99169"/><stop offset="0.6391" stop-color="#eaa35a"/><stop offset="0.6450" stop-color="#e1b162"/><stop offset="0.6509" stop-color="#c2c47a"/><stop offset="0.6568" stop-color="#a9bd67"/><stop offset="0.6627" stop-color="#a2b453"/><stop offset="0.6686" stop-color="#96a659"/><stop offset="0.6746" stop-color="#809e6d"/><stop offset="0.6805" stop-color="#72a895"/><stop offset="0.6864" stop-color="#84a7a2"/><stop offset="0.6923" stop-color="#baa8a3"/><stop offset="0.6982" stop-color="#c59693"/><stop offset="0.7041" stop-color="#bc8683"/><stop offset="0.7101" stop-color="#ad7e84"/><stop offset="0.7160" stop-color="#b0798a"/><stop offset="0.7219" stop-color="#d590a7"/><stop offset="0.7278" stop-color="#e49db8"/><stop offset="0.7337" stop-color="#e4adc7"/><stop offset="0.7396" stop-color="#d8a8bd"/><stop offset="0.7456" stop-color="#d1a8b2"/><stop offset="0.7515" stop-color="#b29fa8"/><stop offset="0.7574" stop-color="#9097a7"/><stop offset="0.7633" stop-color="#998e87"/><stop offset="0.7692" stop-color="#ab8e68"/><stop offset="0.7751" stop-color="#af984d"/><stop offset="0.7811" stop-color="#9d9e45"/><stop offset="0.7870" stop-color="#8aa146"/><stop offset="0.7929" stop-color="#a8a945"/><stop offset="0.7988" stop-color="#ccb44d"/><stop offset="0.8047" stop-color="#c0bc71"/><stop offset="0.8107" stop-color="#b3bc90"/><stop offset="0.8166" stop-color="#b9ac9e"/><stop offset="0.8225" stop-color="#caa39f"/><stop offset="0.8284" stop-color="#d7a09c"/><stop offset="0.8343" stop-color="#d3a7a8"/><stop offset="0.8402" stop-color="#d5b1b9"/><stop offset="0.8462" stop-color="#d8a7bb"/><stop offset="0.8521" stop-color="#d299b7"/><stop offset="0.8580" stop-color="#b88697"/><stop offset="0.8639" stop-color="#a47e85"/><stop offset="0.8698" stop-color="#867d86"/><stop offset="0.8757" stop-color="#858386"/><stop offset="0.8817" stop-color="#9d8875"/><stop offset="0.8876" stop-color="#ad935b"/><stop offset="0.8935" stop-color="#a79c44"/><stop offset="0.8994" stop-color="#94a045"/><stop offset="0.9053" stop-color="#8fa245"/><stop offset="0.9112" stop-color="#8a9e59"/><stop offset="0.9172" stop-color="#87966d"/><stop offset="0.9231" stop-color="#92827a"/><stop offset="0.9290" stop-color="#a67473"/><stop offset="0.9349" stop-color="#b26a69"/><stop offset="0.9408" stop-color="#ab7279"/><stop offset="0.9467" stop-color="#af798b"/><stop offset="0.9527" stop-color="#c886a3"/><stop offset="0.9586" stop-color="#d292b2"/><stop offset="0.9645" stop-color="#cb9ab4"/><stop offset="0.9704" stop-color="#c69bae"/><stop offset="0.9763" stop-color="#c196a3"/><stop offset="0.9822" stop-color="#c293a2"/><stop offset="0.9882" stop-color="#c491a1"/><stop offset="0.9941" stop-color="#c68fa0"/><stop offset="1.0000" stop-color="#c68ea0"/><stop offset="1.0000" stop-color="#c68ea0"/></radialGradient><radialGradient id="g8" cx="0" cy="0" r="24.1" gradientUnits="userSpaceOnUse"><stop offset="0.0000" stop-color="#4e79a7"/><stop offset="0.0124" stop-color="#4e79a7"/><stop offset="0.0249" stop-color="#4e79a7"/><stop offset="0.0373" stop-color="#4e79a7"/><stop offset="0.0498" stop-color="#4e79a7"/><stop offset="0.0622" stop-color="#4e79a7"/><stop offset="0.0747" stop-color="#4e79a7"/><stop offset="0.0871" stop-color="#4e79a7"/><stop offset="0.0996" stop-color="#6590b9"/><stop offset="0.1120" stop-color="#84afd1"/><stop offset="0.1245" stop-color="#a5c3d5"/><stop offset="0.1369" stop-color="#c4b095"/><stop offset="0.1494" stop-color="#e3994e"/><stop offset="0.1618" stop-color="#f49538"/><stop offset="0.1743" stop-color="#f9a757"/><stop offset="0.1867" stop-color="#dfb46d"/><stop offset="0.1992" stop-color="#a2ae63"/><stop offset="0.2116" stop-color="#73b160"/><stop offset="0.2241" stop-color="#7ebe69"/><stop offset="0.2365" stop-color="#9dba5c"/><stop offset="0.2490" stop-color="#b8af49"/><stop offset="0.2614" stop-color="#b3ab57"/><stop offset="0.2739" stop-color="#8cac7e"/><stop offset="0.2863" stop-color="#71ac9f"/><stop offset="0.2988" stop-color="#979d99"/><stop offset="0.3112" stop-color="#cd9390"/><stop offset="0.3237" stop-color="#d58381"/><stop offset="0.3361" stop-color="#b58986"/><stop offset="0.3485" stop-color="#a18187"/><stop offset="0.3610" stop-color="#c48a9c"/><stop offset="0.3734" stop-color="#d28aa8"/><stop offset="0.3859" stop-color="#ca90ae"/><stop offset="0.3983" stop-color="#b58595"/><stop offset="0.4108" stop-color="#af8d8e"/><stop offset="0.4232" stop-color="#88868f"/><stop offset="0.4357" stop-color="#93979d"/><stop offset="0.4481" stop-color="#b89a7a"/><stop offset="0.4606" stop-color="#bda358"/><stop offset="0.4730" stop-color="#9eae5b"/><stop offset="0.4855" stop-color="#9bb456"/><stop offset="0.4979" stop-color="#adb769"/><stop offset="0.5104" stop-color="#a6b285"/><stop offset="0.5228" stop-color="#9d9a94"/><stop offset="0.5353" stop-color="#a78886"/><stop offset="0.5477" stop-color="#b38289"/><stop offset="0.5602" stop-color="#c28a9d"/><stop offset="0.5726" stop-color="#d390af"/><stop offset="0.5851" stop-color="#c295aa"/><stop offset="0.5975" stop-color="#9b92a8"/><stop offset="0.6100" stop-color="#9d9797"/><stop offset="0.6224" stop-color="#aea486"/><stop offset="0.6349" stop-color="#c3ae5e"/><stop offset="0.6473" stop-color="#afaf56"/><stop offset="0.6598" stop-color="#9fae70"/><stop offset="0.6722" stop-color="#aba68d"/><stop offset="0.6846" stop-color="#ad9f9b"/><stop offset="0.6971" stop-color="#c29ca2"/><stop offset="0.7095" stop-color="#c397ac"/><stop offset="0.7220" stop-color="#b88fa5"/><stop offset="0.7344" stop-color="#948fa9"/><stop offset="0.7469" stop-color="#a89d92"/><stop offset="0.7593" stop-color="#b5af80"/><stop offset="0.7718" stop-color="#c8b965"/><stop offset="0.7842" stop-color="#b9b573"/><stop offset="0.7967" stop-color="#c8a282"/><stop offset="0.8091" stop-color="#d29695"/><stop offset="0.8216" stop-color="#d99daa"/><stop offset="0.8340" stop-color="#d6a2af"/><stop offset="0.8465" stop-color="#bda3ae"/><stop offset="0.8589" stop-color="#c7a88d"/><stop offset="0.8714" stop-color="#bfb17d"/><stop offset="0.8838" stop-color="#abb072"/><stop offset="0.8963" stop-color="#99a17d"/><stop offset="0.9087" stop-color="#958f87"/><stop offset="0.9212" stop-color="#b4858d"/><stop offset="0.9336" stop-color="#b58b98"/><stop offset="0.9461" stop-color="#c194a2"/><stop offset="0.9585" stop-color="#bd939d"/><stop offset="0.9710" stop-color="#c293a2"/><stop offset="0.9834" stop-color="#c590a1"/><stop offset="0.9959" stop-color="#c68ea0"/><stop offset="1.0000" stop-color="#c68ea0"/></radialGradient></defs><circle transform="translate(342.1 174.0)" r="33.7" fill="url(#g0)"/><circle transform="translate(482.4 174.0)" r="51.9" fill="url(#g1)"/><circle transform="translate(622.6 174.0)" r="52.5" fill="url(#g2)"/><circle transform="translate(342.1 314.4)" r="47.3" fill="url(#g3)"/><circle transform="translate(482.4 314.4)" r="33.1" fill="url(#g4)"/><circle transform="translate(622.6 314.4)" r="38.5" fill="url(#g5)"/><circle transform="translate(342.1 454.6)" r="52.5" fill="url(#g6)"/><circle transform="translate(482.4 454.6)" r="50.7" fill="url(#g7)"/><circle transform="translate(622.6 454.6)" r="24.1" fill="url(#g8)"/></svg>
<!-- legends -->
<div class="t" style="left:942.200px;top:61px;font-size:6.500px">SUM(Circle Size)</div>
<div class="abs" style="left:939.300px;top:72.400px;width:78.900px;height:64px;overflow:hidden">
  <svg class="ic" width="80" height="64" viewBox="0 0 80 64"><circle cx="54.100" cy="5.400" r="2.600" fill="#c4c4c4" stroke="#a8a8a8" stroke-width="0.500"/></svg>
  <div class="sz" style="left:29.700px;top:11.700px"></div>
  <div class="sz" style="left:19.500px;top:22.400px"></div>
  <div class="sz" style="left:11.600px;top:33.100px"></div>
  <div class="sz" style="left:5.200px;top:43.800px"></div>
  <div class="sz" style="left:0.900px;top:54.700px"></div>
  <div class="szt" style="top:0.900px">0.20</div>
  <div class="szt" style="top:11.700px">20.00</div>
  <div class="szt" style="top:22.400px">40.00</div>
  <div class="szt" style="top:33.100px">60.00</div>
  <div class="szt" style="top:43.800px">80.00</div>
  <div class="szt" style="top:54.700px">94.00</div>
</div>
<div class="abs" style="left:1014px;top:166px;width:1.200px;height:144px;background:#686868"></div>
<div class="t" style="left:942.200px;top:146px;font-size:6.500px">Points</div>
<div class="leglist"><svg class="ic" width="1023" height="559" viewBox="0 0 1023 559" style="overflow:hidden"><rect x="940.2" y="158.40" width="7.7" height="7.5" fill="#4E79A7"/><rect x="940.2" y="169.09" width="7.7" height="7.5" fill="#A0CBE8"/><rect x="940.2" y="179.77" width="7.7" height="7.5" fill="#F28E2B"/><rect x="940.2" y="190.46" width="7.7" height="7.5" fill="#FFBE7D"/><rect x="940.2" y="201.14" width="7.7" height="7.5" fill="#59A14F"/><rect x="940.2" y="211.83" width="7.7" height="7.5" fill="#8CD17D"/><rect x="940.2" y="222.52" width="7.7" height="7.5" fill="#B6992D"/><rect x="940.2" y="233.20" width="7.7" height="7.5" fill="#F1CE63"/><rect x="940.2" y="243.89" width="7.7" height="7.5" fill="#499894"/><rect x="940.2" y="254.57" width="7.7" height="7.5" fill="#86BCB6"/><rect x="940.2" y="265.26" width="7.7" height="7.5" fill="#E15759"/><rect x="940.2" y="275.95" width="7.7" height="7.5" fill="#FF9D9A"/><rect x="940.2" y="286.63" width="7.7" height="7.5" fill="#79706E"/><rect x="940.2" y="297.32" width="7.7" height="7.5" fill="#BAB0AC"/><rect x="940.2" y="308.00" width="7.7" height="7.5" fill="#D37295"/><rect x="940.2" y="318.69" width="7.7" height="7.5" fill="#FABFD2"/><rect x="940.2" y="329.38" width="7.7" height="7.5" fill="#B07AA1"/><rect x="940.2" y="340.06" width="7.7" height="7.5" fill="#D4A6C8"/><rect x="940.2" y="350.75" width="7.7" height="7.5" fill="#9D7660"/><rect x="940.2" y="361.43" width="7.7" height="7.5" fill="#D7B5A6"/><rect x="940.2" y="372.12" width="7.7" height="7.5" fill="#4E79A7"/><rect x="940.2" y="382.81" width="7.7" height="7.5" fill="#A0CBE8"/><rect x="940.2" y="393.49" width="7.7" height="7.5" fill="#F28E2B"/><rect x="940.2" y="404.18" width="7.7" height="7.5" fill="#FFBE7D"/><rect x="940.2" y="414.86" width="7.7" height="7.5" fill="#59A14F"/><rect x="940.2" y="425.55" width="7.7" height="7.5" fill="#8CD17D"/><rect x="940.2" y="436.24" width="7.7" height="7.5" fill="#B6992D"/><rect x="940.2" y="446.92" width="7.7" height="7.5" fill="#F1CE63"/><rect x="940.2" y="457.61" width="7.7" height="7.5" fill="#499894"/><rect x="940.2" y="468.29" width="7.7" height="7.5" fill="#86BCB6"/><rect x="940.2" y="478.98" width="7.7" height="7.5" fill="#E15759"/><rect x="940.2" y="489.67" width="7.7" height="7.5" fill="#FF9D9A"/><rect x="940.2" y="500.35" width="7.7" height="7.5" fill="#79706E"/><rect x="940.2" y="511.04" width="7.7" height="7.5" fill="#BAB0AC"/><rect x="940.2" y="521.72" width="7.7" height="7.5" fill="#D37295"/><rect x="940.2" y="532.41" width="7.7" height="7.5" fill="#FABFD2"/><rect x="940.2" y="543.10" width="7.7" height="7.5" fill="#B07AA1"/><rect x="940.2" y="553.78" width="7.7" height="7.5" fill="#D4A6C8"/></svg><div class="li" style="top:158.40px"><span>1</span></div><div class="li" style="top:169.09px"><span>2</span></div><div class="li" style="top:179.77px"><span>3</span></div><div class="li" style="top:190.46px"><span>4</span></div><div class="li" style="top:201.14px"><span>5</span></div><div class="li" style="top:211.83px"><span>6</span></div><div class="li" style="top:222.52px"><span>7</span></div><div class="li" style="top:233.20px"><span>8</span></div><div class="li" style="top:243.89px"><span>9</span></div><div class="li" style="top:254.57px"><span>10</span></div><div class="li" style="top:265.26px"><span>11</span></div><div class="li" style="top:275.95px"><span>12</span></div><div class="li" style="top:286.63px"><span>13</span></div><div class="li" style="top:297.32px"><span>14</span></div><div class="li" style="top:308.00px"><span>15</span></div><div class="li" style="top:318.69px"><span>16</span></div><div class="li" style="top:329.38px"><span>17</span></div><div class="li" style="top:340.06px"><span>18</span></div><div class="li" style="top:350.75px"><span>19</span></div><div class="li" style="top:361.43px"><span>20</span></div><div class="li" style="top:372.12px"><span>21</span></div><div class="li" style="top:382.81px"><span>22</span></div><div class="li" style="top:393.49px"><span>23</span></div><div class="li" style="top:404.18px"><span>24</span></div><div class="li" style="top:414.86px"><span>25</span></div><div class="li" style="top:425.55px"><span>26</span></div><div class="li" style="top:436.24px"><span>27</span></div><div class="li" style="top:446.92px"><span>28</span></div><div class="li" style="top:457.61px"><span>29</span></div><div class="li" style="top:468.29px"><span>30</span></div><div class="li" style="top:478.98px"><span>31</span></div><div class="li" style="top:489.67px"><span>32</span></div><div class="li" style="top:500.35px"><span>33</span></div><div class="li" style="top:511.04px"><span>34</span></div><div class="li" style="top:521.72px"><span>35</span></div><div class="li" style="top:532.41px"><span>36</span></div><div class="li" style="top:543.10px"><span>37</span></div><div class="li" style="top:553.78px"><span>38</span></div></div>
</body></html>
